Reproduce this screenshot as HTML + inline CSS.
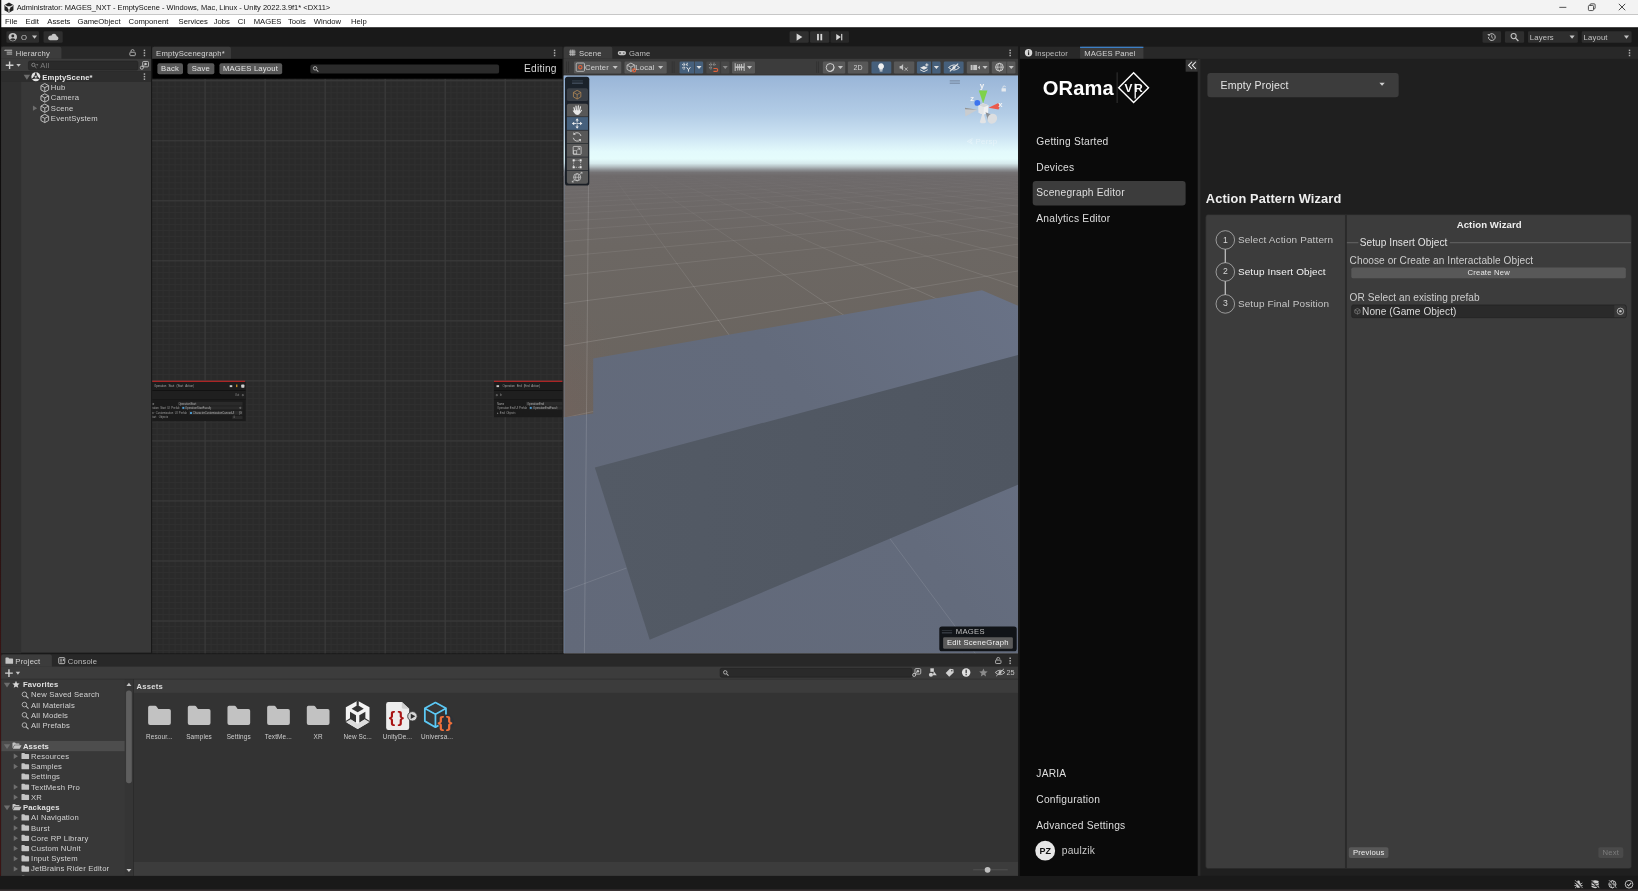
<!DOCTYPE html>
<html><head><meta charset="utf-8"><title>Unity - MAGES Panel</title>
<style>
html,body{margin:0;padding:0;background:#191919;}
body{width:1638px;height:891px;overflow:hidden;position:relative;font-family:"Liberation Sans",sans-serif;}
#stage{position:absolute;left:0;top:0;width:2560px;height:1393px;transform:scale(0.63984375);transform-origin:0 0;overflow:hidden;}
#stage div,#stage svg{position:absolute;}
#stage svg{overflow:visible;}
.t{white-space:nowrap;}
</style></head><body><div id="stage">
<div style="left:0px;top:23px;width:2560px;height:20.6px;background:#ffffff;"></div>
<div style="left:0px;top:0px;width:2560px;height:23px;background:#f3f3f3;"></div>
<svg style="left:5px;top:3px;" width="18" height="18" viewBox="0 0 18 18"><path d="M9 1 L16 5 V13 L9 17 L2 13 V5 Z" fill="#222"/><path d="M9 9 L9 16 M9 9 L3 5.6 M9 9 L15 5.6" stroke="#eee" stroke-width="1.6" fill="none"/><circle cx="9" cy="9" r="2.2" fill="#eee"/></svg>
<div class="t" style="left:26px;top:0px;height:23px;line-height:23px;font-size:11.7px;color:#111;">Administrator: MAGES_NXT - EmptyScene - Windows, Mac, Linux - Unity 2022.3.9f1* &lt;DX11&gt;</div>
<div class="t" style="left:8px;top:23px;height:20px;line-height:20px;font-size:12px;color:#111;">File</div>
<div class="t" style="left:40px;top:23px;height:20px;line-height:20px;font-size:12px;color:#111;">Edit</div>
<div class="t" style="left:74px;top:23px;height:20px;line-height:20px;font-size:12px;color:#111;">Assets</div>
<div class="t" style="left:121px;top:23px;height:20px;line-height:20px;font-size:12px;color:#111;">GameObject</div>
<div class="t" style="left:201px;top:23px;height:20px;line-height:20px;font-size:12px;color:#111;">Component</div>
<div class="t" style="left:279px;top:23px;height:20px;line-height:20px;font-size:12px;color:#111;">Services</div>
<div class="t" style="left:334px;top:23px;height:20px;line-height:20px;font-size:12px;color:#111;">Jobs</div>
<div class="t" style="left:371.5px;top:23px;height:20px;line-height:20px;font-size:12px;color:#111;">CI</div>
<div class="t" style="left:396.5px;top:23px;height:20px;line-height:20px;font-size:12px;color:#111;">MAGES</div>
<div class="t" style="left:450px;top:23px;height:20px;line-height:20px;font-size:12px;color:#111;">Tools</div>
<div class="t" style="left:490.5px;top:23px;height:20px;line-height:20px;font-size:12px;color:#111;">Window</div>
<div class="t" style="left:548.5px;top:23px;height:20px;line-height:20px;font-size:12px;color:#111;">Help</div>
<svg style="left:2433px;top:4.5px;" width="20" height="12" viewBox="0 0 20 12"><path d="M4 6.5 H15" stroke="#222" stroke-width="1.2"/></svg>
<svg style="left:2478px;top:2.5px;" width="20" height="16" viewBox="0 0 20 16"><rect x="4.5" y="5.5" width="8" height="8" rx="1.5" fill="none" stroke="#222" stroke-width="1.2"/><path d="M7 5.5 V4.5 Q7 3 8.5 3 H13.5 Q15 3 15 4.5 V9.5 Q15 11 13.5 11 H12.5" fill="none" stroke="#222" stroke-width="1.2"/></svg>
<svg style="left:2525px;top:2.5px;" width="20" height="16" viewBox="0 0 20 16"><path d="M5 3 L15 13 M15 3 L5 13" stroke="#222" stroke-width="1.3"/></svg>
<div style="left:0px;top:43.3px;width:2560px;height:1350px;background:#191919;"></div>
<div style="left:0px;top:43px;width:2560px;height:1.3px;background:#000;"></div>
<div style="left:0px;top:0px;width:1.6px;height:1393px;background:linear-gradient(180deg,#0c0c0c 0%,#141010 40%,#3a1414 75%,#3a1414 100%);"></div>
<div style="left:9.5px;top:49px;width:51.5px;height:18px;background:#2e2e2e;border-radius:2px;"></div>
<svg style="left:12px;top:50px;" width="16" height="16" viewBox="0 0 16 16"><circle cx="8" cy="8" r="6.6" fill="#c4c4c4"/><circle cx="8" cy="6.3" r="2.3" fill="#2e2e2e"/><path d="M3.6 11.6 Q8 8 12.4 11.6 Q8 15.5 3.6 11.6Z" fill="#2e2e2e"/></svg>
<div class="t" style="left:33px;top:49px;height:18px;line-height:18px;font-size:12px;color:#c4c4c4;">O</div>
<svg style="left:49px;top:54px;" width="10" height="8" viewBox="0 0 10 8"><path d="M1 1.5 H9 L5 6.5Z" fill="#c4c4c4"/></svg>
<div style="left:67.5px;top:49px;width:30px;height:18px;background:#2e2e2e;border-radius:2px;"></div>
<svg style="left:73px;top:51px;" width="20" height="14" viewBox="0 0 20 14"><path d="M5 12 H15.5 A3.2 3.2 0 0 0 15.8 5.7 A4.6 4.6 0 0 0 7 4.8 A3.7 3.7 0 0 0 5 12Z" fill="#c4c4c4"/></svg>
<div style="left:1233.5px;top:49px;width:30.5px;height:18px;background:#2f2f2f;border-radius:2px;"></div>
<div style="left:1266px;top:49px;width:30px;height:18px;background:#2f2f2f;border-radius:2px;"></div>
<div style="left:1298px;top:49px;width:29px;height:18px;background:#282828;border-radius:2px;"></div>
<svg style="left:1242px;top:51px;" width="14" height="14" viewBox="0 0 14 14"><path d="M3 1.5 L12 7 L3 12.5Z" fill="#d8d8d8"/></svg>
<svg style="left:1274px;top:51px;" width="14" height="14" viewBox="0 0 14 14"><rect x="3" y="2" width="2.8" height="10" fill="#d8d8d8"/><rect x="8.2" y="2" width="2.8" height="10" fill="#d8d8d8"/></svg>
<svg style="left:1305px;top:51px;" width="14" height="14" viewBox="0 0 14 14"><path d="M2 2 L9 7 L2 12Z" fill="#d8d8d8"/><rect x="9.6" y="2" width="1.8" height="10" fill="#d8d8d8"/></svg>
<div style="left:2316.5px;top:49px;width:29.5px;height:18px;background:#2e2e2e;border-radius:2px;"></div>
<div style="left:2352px;top:49px;width:29.5px;height:18px;background:#2e2e2e;border-radius:2px;"></div>
<div style="left:2388px;top:49px;width:77.5px;height:18px;background:#2e2e2e;border-radius:2px;"></div>
<div style="left:2472px;top:49px;width:78px;height:18px;background:#2e2e2e;border-radius:2px;"></div>
<svg style="left:2323px;top:50px;" width="16" height="16" viewBox="0 0 16 16"><path d="M3.2 8 A5.3 5.3 0 1 0 5 4" fill="none" stroke="#c4c4c4" stroke-width="1.5"/><path d="M1.5 3 L5.8 3.4 L4.6 7Z" fill="#c4c4c4"/><path d="M8.4 5 V8.4 L10.6 10" fill="none" stroke="#c4c4c4" stroke-width="1.3"/></svg>
<svg style="left:2359px;top:50px;" width="16" height="16" viewBox="0 0 16 16"><circle cx="6.6" cy="6.4" r="4" fill="none" stroke="#c4c4c4" stroke-width="1.6"/><path d="M9.6 9.6 L14 14" stroke="#c4c4c4" stroke-width="2"/></svg>
<div class="t" style="left:2391px;top:49px;height:18px;line-height:18px;font-size:12px;color:#c4c4c4;letter-spacing:0.25px;">Layers</div>
<svg style="left:2452px;top:54px;" width="10" height="8" viewBox="0 0 10 8"><path d="M1 1.5 H9 L5 6.5Z" fill="#c4c4c4"/></svg>
<div class="t" style="left:2475px;top:49px;height:18px;line-height:18px;font-size:12px;color:#c4c4c4;letter-spacing:0.25px;">Layout</div>
<svg style="left:2537px;top:54px;" width="10" height="8" viewBox="0 0 10 8"><path d="M1 1.5 H9 L5 6.5Z" fill="#c4c4c4"/></svg>
<div style="left:1.6px;top:72.9px;width:234.4px;height:947.6px;background:#383838;"></div>
<div style="left:1.6px;top:72.9px;width:234.4px;height:19.099999999999994px;background:#282828;"></div>
<div style="left:1.6px;top:73.4px;width:94px;height:18.599999999999994px;background:#3c3c3c;border-radius:3px 3px 0 0;"></div>
<div class="t" style="left:24.5px;top:74.7px;height:19px;line-height:19px;font-size:12px;color:#d2d2d2;letter-spacing:0.25px;">Hierarchy</div>
<svg style="left:7px;top:76.9px;" width="13" height="11" viewBox="0 0 13 11"><path d="M0.5 1.5 H12 M3.5 4.5 H12 M3.5 7.5 H12 M0.5 1.5 V2.5" stroke="#c4c4c4" stroke-width="1.5"/></svg>
<svg style="left:202px;top:75.9px;" width="11" height="12" viewBox="0 0 11 12"><rect x="1" y="5.6" width="8.4" height="5.4" rx="1" fill="none" stroke="#b2b2b2" stroke-width="1.5"/><path d="M2.8 5.6 V4 A2.4 2.4 0 0 1 7.6 3.8" fill="none" stroke="#b2b2b2" stroke-width="1.4"/></svg>
<svg style="left:223.5px;top:75.9px;" width="4" height="14" viewBox="0 0 4 14"><rect x="0.6" y="1.6" width="2.3" height="2.3" fill="#b2b2b2"/><rect x="0.6" y="5.6" width="2.3" height="2.3" fill="#b2b2b2"/><rect x="0.6" y="9.6" width="2.3" height="2.3" fill="#b2b2b2"/></svg>
<div style="left:1.6px;top:92px;width:234.4px;height:20px;background:#3c3c3c;"></div>
<div style="left:1.6px;top:111.3px;width:234.4px;height:1px;background:#232323;"></div>
<svg style="left:8px;top:95px;" width="14" height="14" viewBox="0 0 14 14"><path d="M7 1 V13 M1 7 H13" stroke="#d2d2d2" stroke-width="2.2"/></svg>
<svg style="left:25px;top:99px;" width="8" height="7" viewBox="0 0 8 7"><path d="M0.5 1 H7.5 L4 5.5Z" fill="#c4c4c4"/></svg>
<div style="left:44px;top:94.5px;width:172px;height:15.5px;background:#2a2a2a;border-radius:3px;border:1px solid #222;box-sizing:border-box;"></div>
<svg style="left:48px;top:97px;" width="13" height="11" viewBox="0 0 13 11"><circle cx="4.2" cy="4.4" r="2.6" fill="none" stroke="#8a8a8a" stroke-width="1.4"/><path d="M6.2 6.4 L9 9.2" stroke="#8a8a8a" stroke-width="1.5"/><path d="M8.5 3.5 H12 L10.2 5.6Z" fill="#8a8a8a"/></svg>
<div class="t" style="left:63px;top:94.5px;height:16px;line-height:16px;font-size:12px;color:#7e7e7e;letter-spacing:0.25px;">All</div>
<svg style="left:218px;top:94px;" width="16" height="16" viewBox="0 0 16 16"><rect x="5" y="2" width="9" height="8.5" rx="1.5" fill="none" stroke="#c4c4c4" stroke-width="1.4"/><circle cx="9.5" cy="6" r="2" fill="#c4c4c4"/><circle cx="3.7" cy="11.8" r="2.4" fill="none" stroke="#c4c4c4" stroke-width="1.4"/><path d="M5.5 10 L8 7.6" stroke="#c4c4c4" stroke-width="1.4"/></svg>
<div style="left:1.6px;top:112px;width:31px;height:909px;background:#303030;"></div>
<div style="left:1.6px;top:112px;width:234.4px;height:16px;background:#2d2d2d;"></div>
<svg style="left:36px;top:116px;" width="12" height="9" viewBox="0 0 12 9"><path d="M1 1 H11 L6 8.5Z" fill="#6e6e6e"/></svg>
<svg style="left:48px;top:112px;" width="16" height="16" viewBox="0 0 16 16"><circle cx="8" cy="8" r="7" fill="#e4e4e4"/><path d="M8 8 L8 1.5 M8 8 L2.3 11.4 M8 8 L13.7 11.4" stroke="#2d2d2d" stroke-width="2"/><path d="M8 3.3 L12.2 10.3 H3.8Z" fill="none" stroke="#2d2d2d" stroke-width="1.3"/><circle cx="8" cy="8" r="1.4" fill="#e4e4e4"/></svg>
<div class="t" style="left:66px;top:112.6px;height:16px;line-height:16px;font-size:12px;color:#e6e6e6;font-weight:700;letter-spacing:0.2px;">EmptyScene*</div>
<svg style="left:223.5px;top:113px;" width="4" height="14" viewBox="0 0 4 14"><rect x="0.6" y="1.6" width="2.3" height="2.3" fill="#b2b2b2"/><rect x="0.6" y="5.6" width="2.3" height="2.3" fill="#b2b2b2"/><rect x="0.6" y="9.6" width="2.3" height="2.3" fill="#b2b2b2"/></svg>
<svg style="left:62px;top:128.8px;" width="16" height="16" viewBox="0 0 16 16"><path d="M8 1.6 L14 4.8 V11.4 L8 14.6 L2 11.4 V4.8Z M2.2 4.9 L8 8 L13.8 4.9 M8 8 V14.4" fill="none" stroke="#c8c8c8" stroke-width="1.4" stroke-linejoin="round"/></svg>
<div class="t" style="left:79.5px;top:128.8px;height:16px;line-height:16px;font-size:12px;color:#d2d2d2;letter-spacing:0.25px;">Hub</div>
<svg style="left:62px;top:144.8px;" width="16" height="16" viewBox="0 0 16 16"><path d="M8 1.6 L14 4.8 V11.4 L8 14.6 L2 11.4 V4.8Z M2.2 4.9 L8 8 L13.8 4.9 M8 8 V14.4" fill="none" stroke="#c8c8c8" stroke-width="1.4" stroke-linejoin="round"/></svg>
<div class="t" style="left:79.5px;top:144.8px;height:16px;line-height:16px;font-size:12px;color:#d2d2d2;letter-spacing:0.25px;">Camera</div>
<svg style="left:62px;top:160.8px;" width="16" height="16" viewBox="0 0 16 16"><path d="M8 1.6 L14 4.8 V11.4 L8 14.6 L2 11.4 V4.8Z M2.2 4.9 L8 8 L13.8 4.9 M8 8 V14.4" fill="none" stroke="#c8c8c8" stroke-width="1.4" stroke-linejoin="round"/></svg>
<div class="t" style="left:79.5px;top:160.8px;height:16px;line-height:16px;font-size:12px;color:#d2d2d2;letter-spacing:0.25px;">Scene</div>
<svg style="left:50px;top:163.8px;" width="9" height="10" viewBox="0 0 9 10"><path d="M1.5 0.8 L8 5 L1.5 9.2Z" fill="#6e6e6e"/></svg>
<svg style="left:62px;top:176.8px;" width="16" height="16" viewBox="0 0 16 16"><path d="M8 1.6 L14 4.8 V11.4 L8 14.6 L2 11.4 V4.8Z M2.2 4.9 L8 8 L13.8 4.9 M8 8 V14.4" fill="none" stroke="#c8c8c8" stroke-width="1.4" stroke-linejoin="round"/></svg>
<div class="t" style="left:79.5px;top:176.8px;height:16px;line-height:16px;font-size:12px;color:#d2d2d2;letter-spacing:0.25px;">EventSystem</div>
<div style="left:238px;top:72.9px;width:640.5px;height:947.6px;background:#282828;"></div>
<div style="left:238px;top:72.9px;width:640.5px;height:19.099999999999994px;background:#282828;"></div>
<div style="left:238px;top:73.4px;width:123px;height:18.599999999999994px;background:#3c3c3c;border-radius:3px 3px 0 0;"></div>
<div class="t" style="left:244px;top:74.7px;height:19px;line-height:19px;font-size:12px;color:#d2d2d2;letter-spacing:0.25px;">EmptyScenegraph*</div>
<svg style="left:865px;top:75.9px;" width="4" height="14" viewBox="0 0 4 14"><rect x="0.6" y="1.6" width="2.3" height="2.3" fill="#b2b2b2"/><rect x="0.6" y="5.6" width="2.3" height="2.3" fill="#b2b2b2"/><rect x="0.6" y="9.6" width="2.3" height="2.3" fill="#b2b2b2"/></svg>
<div style="left:238px;top:123px;width:640.5px;height:897.5px;overflow:hidden;background-color:#2a2a2a;
background-image:linear-gradient(90deg,#3b3b3b 0,#3b3b3b 1.4px,transparent 1.4px),linear-gradient(0deg,transparent 92.42999999999999px,#3b3b3b 92.42999999999999px),linear-gradient(90deg,#2f2f2f 0,#2f2f2f 1.2px,transparent 1.2px),linear-gradient(0deg,transparent 8.183px,#2f2f2f 8.183px);
background-size:93.83px 93.83px,93.83px 93.83px,9.383px 9.383px,9.383px 9.383px;
background-position:81.76556776556771px 0,0 -91.39431013431013px,6.701567765567717px 0,0 -7.147310134310131px;">
<div style="left:-3.6px;top:474.0px;width:149.1px;height:61.4px;background:#1b1b1b;"></div>
<div style="left:-3.6px;top:474.0px;width:149.1px;height:13.0px;background:#1d1d1d;"></div>
<div style="left:-3.6px;top:487.0px;width:149.1px;height:1.3px;background:#101010;"></div>
<div style="left:-3.6px;top:488.2px;width:149.1px;height:13.1px;background:#1f1f1f;"></div>
<div style="left:-3.6px;top:501.1px;width:149.1px;height:0.9px;background:#161616;"></div>
<div style="left:-3.6px;top:472.3px;width:148.8px;height:2.2px;background:#ad2626;"></div>
<div class="t" style="left:2.7px;top:477.3px;width:62.5px;height:8px;line-height:8px;font-size:4.4px;color:#a8a8a8;letter-spacing:0;text-align:justify;text-align-last:justify;overflow:hidden;">Operation Start (Start Action)</div>
<div style="left:121.2px;top:479.0px;width:4.1px;height:2.8px;background:#c8c8c8;"></div>
<div style="left:130.8px;top:478.4px;width:2.5px;height:4.1px;background:#d89a2c;"></div>
<div style="left:138.7px;top:478.1px;width:5.0px;height:4.7px;background:#cfcfcf;border-radius:1px;"></div>
<div class="t" style="left:129.3px;top:491.2px;width:7.8px;height:8px;line-height:8px;font-size:4.0px;color:#9a9a9a;letter-spacing:0;text-align:justify;text-align-last:justify;overflow:hidden;">Out</div>
<div style="left:139.9px;top:492.9px;width:2.8px;height:2.8px;background:#1f1f1f;border:0.6px solid #8a8a8a;border-radius:50%;box-sizing:border-box;"></div>
<div style="left:40.0px;top:504.7px;width:101.3px;height:5.9px;background:#2a2a2a;"></div>
<div style="left:45.7px;top:511.7px;width:95.6px;height:5.8px;background:#2a2a2a;"></div>
<div style="left:57.4px;top:519.3px;width:83.9px;height:5.9px;background:#2a2a2a;"></div>
<div style="left:125.4px;top:526.5px;width:15.9px;height:5.6px;background:#2a2a2a;"></div>
<div class="t" style="left:-2.8px;top:504.5px;width:7.0px;height:8px;line-height:8px;font-size:4.3px;color:#a8a8a8;letter-spacing:0;text-align:justify;text-align-last:justify;overflow:hidden;">me</div>
<div class="t" style="left:40.8px;top:504.5px;width:29.9px;height:8px;line-height:8px;font-size:4.3px;color:#b2b2b2;letter-spacing:0;text-align:justify;text-align-last:justify;overflow:hidden;">OperationStart</div>
<div class="t" style="left:-2.8px;top:511.4px;width:45.3px;height:8px;line-height:8px;font-size:4.3px;color:#9e9e9e;letter-spacing:0;text-align:justify;text-align-last:justify;overflow:hidden;">eration Start UI Prefab</div>
<div style="left:46.8px;top:512.9px;width:3.1px;height:3.1px;background:#4d9fd6;"></div>
<div class="t" style="left:51.1px;top:511.4px;width:41.4px;height:8px;line-height:8px;font-size:4.3px;color:#b2b2b2;letter-spacing:0;text-align:justify;text-align-last:justify;overflow:hidden;">OperationStartFaculty</div>
<div style="left:135.8px;top:512.9px;width:3.1px;height:3.1px;background:#2a2a2a;border:0.6px solid #8a8a8a;border-radius:50%;box-sizing:border-box;"></div>
<div class="t" style="left:-2.8px;top:519.2px;width:57.0px;height:8px;line-height:8px;font-size:4.3px;color:#9e9e9e;letter-spacing:0;text-align:justify;text-align-last:justify;overflow:hidden;">ser Customization UI Prefab</div>
<div style="left:58.6px;top:520.8px;width:3.1px;height:3.1px;background:#4d9fd6;"></div>
<div class="t" style="left:63.3px;top:519.2px;width:76.9px;height:8px;line-height:8px;font-size:4.3px;color:#b2b2b2;letter-spacing:0;text-align:justify;text-align-last:justify;overflow:hidden;">CharacterCustomizationCanvasUI (G</div>
<div class="t" style="left:-2.8px;top:526.2px;width:27.4px;height:8px;line-height:8px;font-size:4.3px;color:#9e9e9e;letter-spacing:0;text-align:justify;text-align-last:justify;overflow:hidden;">Start Objects</div>
<div class="t" style="left:126.5px;top:526.2px;width:2.2px;height:8px;line-height:8px;font-size:4.3px;color:#b2b2b2;letter-spacing:0;text-align:justify;text-align-last:justify;overflow:hidden;">0</div>
<div style="left:534.4px;top:474.0px;width:109.1px;height:54.7px;background:#1b1b1b;"></div>
<div style="left:534.4px;top:474.0px;width:109.1px;height:13.0px;background:#1d1d1d;"></div>
<div style="left:534.4px;top:487.0px;width:109.1px;height:1.3px;background:#101010;"></div>
<div style="left:534.4px;top:488.2px;width:109.1px;height:13.1px;background:#1f1f1f;"></div>
<div style="left:534.4px;top:501.1px;width:109.1px;height:0.9px;background:#161616;"></div>
<div style="left:534.4px;top:472.3px;width:109.1px;height:2.2px;background:#ad2626;"></div>
<div style="left:537.8px;top:479.2px;width:4.1px;height:2.7px;background:#c8c8c8;"></div>
<div class="t" style="left:547.3px;top:477.3px;width:58.8px;height:8px;line-height:8px;font-size:4.4px;color:#a8a8a8;letter-spacing:0;text-align:justify;text-align-last:justify;overflow:hidden;">Operation End (End Action)</div>
<div style="left:537.2px;top:492.9px;width:2.8px;height:2.8px;background:#1f1f1f;border:0.6px solid #8a8a8a;border-radius:50%;box-sizing:border-box;"></div>
<div class="t" style="left:543.1px;top:491.2px;width:4.1px;height:8px;line-height:8px;font-size:4.0px;color:#9a9a9a;letter-spacing:0;text-align:justify;text-align-last:justify;overflow:hidden;">In</div>
<div style="left:584.1px;top:504.7px;width:59.4px;height:5.9px;background:#2a2a2a;"></div>
<div style="left:588.8px;top:511.7px;width:54.7px;height:5.8px;background:#2a2a2a;"></div>
<div class="t" style="left:538.8px;top:504.5px;width:11.7px;height:8px;line-height:8px;font-size:4.3px;color:#a8a8a8;letter-spacing:0;text-align:justify;text-align-last:justify;overflow:hidden;">Name</div>
<div class="t" style="left:585.6px;top:504.5px;width:27.4px;height:8px;line-height:8px;font-size:4.3px;color:#b2b2b2;letter-spacing:0;text-align:justify;text-align-last:justify;overflow:hidden;">OperationEnd</div>
<div class="t" style="left:538.8px;top:511.4px;width:46.9px;height:8px;line-height:8px;font-size:4.3px;color:#9e9e9e;letter-spacing:0;text-align:justify;text-align-last:justify;overflow:hidden;">Operation End UI Prefab</div>
<div style="left:590.0px;top:512.9px;width:3.1px;height:3.1px;background:#4d9fd6;"></div>
<div class="t" style="left:595.0px;top:511.4px;width:38.3px;height:8px;line-height:8px;font-size:4.3px;color:#b2b2b2;letter-spacing:0;text-align:justify;text-align-last:justify;overflow:hidden;">OperationEndFaculty</div>
<div class="t" style="left:538.8px;top:518.6px;width:28.9px;height:8px;line-height:8px;font-size:4.3px;color:#9e9e9e;letter-spacing:0;text-align:justify;text-align-last:justify;overflow:hidden;">▸ End Objects</div>
</div>
<div style="left:238px;top:92px;width:640.5px;height:31px;background:#000;"></div>
<div style="left:245.5px;top:98.5px;width:40.5px;height:17.5px;background:#585858;border-radius:3px;"></div>
<div class="t" style="left:245.5px;top:98.5px;width:40.5px;height:17.5px;line-height:17.5px;font-size:12px;color:#e4e4e4;text-align:center;letter-spacing:0.3px;">Back</div>
<div style="left:293px;top:98.5px;width:42px;height:17.5px;background:#585858;border-radius:3px;"></div>
<div class="t" style="left:293px;top:98.5px;width:42px;height:17.5px;line-height:17.5px;font-size:12px;color:#e4e4e4;text-align:center;letter-spacing:0.3px;">Save</div>
<div style="left:342.5px;top:98.5px;width:98px;height:17.5px;background:#585858;border-radius:3px;"></div>
<div class="t" style="left:342.5px;top:98.5px;width:98px;height:17.5px;line-height:17.5px;font-size:12px;color:#e4e4e4;text-align:center;letter-spacing:0.3px;">MAGES Layout</div>
<div style="left:485px;top:100.5px;width:295px;height:14.5px;background:#2a2a2a;border-radius:3px;"></div>
<svg style="left:488px;top:102px;" width="12" height="12" viewBox="0 0 12 12"><circle cx="4.5" cy="4.8" r="2.7" fill="none" stroke="#bbb" stroke-width="1.4"/><path d="M6.5 7 L9.5 10" stroke="#bbb" stroke-width="1.6"/></svg>
<div class="t" style="left:819px;top:96px;height:24px;line-height:24px;font-size:16px;color:#d6d6d6;letter-spacing:0.3px;">Editing</div>
<div style="left:881px;top:72.9px;width:710px;height:947.6px;background:#383838;"></div>
<div style="left:881px;top:72.9px;width:710px;height:19.099999999999994px;background:#282828;"></div>
<div style="left:881px;top:73.4px;width:76px;height:18.599999999999994px;background:#3c3c3c;border-radius:3px 3px 0 0;"></div>
<div class="t" style="left:905px;top:74.7px;height:19px;line-height:19px;font-size:12px;color:#d2d2d2;letter-spacing:0.25px;">Scene</div>
<div class="t" style="left:983px;top:74.7px;height:19px;line-height:19px;font-size:12px;color:#bdbdbd;letter-spacing:0.25px;">Game</div>
<svg style="left:889px;top:77.4px;" width="11" height="11" viewBox="0 0 11 11"><path d="M0.5 3 H10.5 M0.5 5.5 H10.5 M0.5 8 H10.5 M3 0.5 V10.5 M5.5 0.5 V10.5 M8 0.5 V10.5" stroke="#c4c4c4" stroke-width="1.2"/></svg>
<svg style="left:965px;top:78.9px;" width="14" height="8" viewBox="0 0 14 8"><rect x="0.5" y="0.8" width="13" height="6.4" rx="3.2" fill="#c4c4c4"/><circle cx="4" cy="4" r="1.3" fill="#282828"/><circle cx="10" cy="4" r="1" fill="#282828"/></svg>
<svg style="left:1577px;top:75.9px;" width="4" height="14" viewBox="0 0 4 14"><rect x="0.6" y="1.6" width="2.3" height="2.3" fill="#b2b2b2"/><rect x="0.6" y="5.6" width="2.3" height="2.3" fill="#b2b2b2"/><rect x="0.6" y="9.6" width="2.3" height="2.3" fill="#b2b2b2"/></svg>
<div style="left:881px;top:92px;width:710px;height:25.5px;background:#3c3c3c;"></div>
<div style="left:881px;top:117px;width:710px;height:1px;background:#1e1e1e;"></div>
<div style="left:885.3724053724053px;top:96px;width:1px;height:18px;background:#2e2e2e;"></div>
<div style="left:888.0293040293041px;top:96px;width:1px;height:18px;background:#2e2e2e;"></div>
<div style="left:1050.2564102564102px;top:96px;width:1px;height:18px;background:#2e2e2e;"></div>
<div style="left:1052.9133089133088px;top:96px;width:1px;height:18px;background:#2e2e2e;"></div>
<div style="left:1276.092796092796px;top:96px;width:1px;height:18px;background:#2e2e2e;"></div>
<div style="left:1278.7496947496948px;top:96px;width:1px;height:18px;background:#2e2e2e;"></div>
<div style="left:897.2503052503052px;top:95.5px;width:73.92429792429778px;height:19px;background:#585858;border-radius:2px;"></div>
<svg style="left:899.2503052503052px;top:97px;" width="16" height="16" viewBox="0 0 16 16"><rect x="1.5" y="1.5" width="13" height="13" rx="1.5" fill="none" stroke="#c4c4c4" stroke-width="1.3"/><circle cx="8" cy="8" r="2.6" fill="none" stroke="#e0613a" stroke-width="1.7"/></svg>
<div class="t" style="left:914.2503052503052px;top:95.5px;height:19px;line-height:19px;font-size:12px;color:#d2d2d2;letter-spacing:0.25px;">Center</div>
<svg style="left:957.2503052503052px;top:102px;" width="9" height="7" viewBox="0 0 9 7"><path d="M0.5 1 H8.5 L4.5 6Z" fill="#c4c4c4"/></svg>
<div style="left:976.019536019536px;top:95.5px;width:65.95360195360195px;height:19px;background:#585858;border-radius:2px;"></div>
<svg style="left:978.019536019536px;top:97px;" width="16" height="16" viewBox="0 0 16 16"><path d="M8 1.6 L14 4.8 V11.4 L8 14.6 L2 11.4 V4.8Z M2.2 4.9 L8 8 L13.8 4.9 M8 8 V14.4" fill="none" stroke="#c4c4c4" stroke-width="1.4" stroke-linejoin="round"/></svg>
<svg style="left:987.019536019536px;top:106px;" width="8" height="8" viewBox="0 0 8 8"><circle cx="4" cy="4" r="2.4" fill="none" stroke="#e0613a" stroke-width="1.7"/></svg>
<div class="t" style="left:993.019536019536px;top:95.5px;height:19px;line-height:19px;font-size:12px;color:#d2d2d2;letter-spacing:0.25px;">Local</div>
<svg style="left:1028.019536019536px;top:102px;" width="9" height="7" viewBox="0 0 9 7"><path d="M0.5 1 H8.5 L4.5 6Z" fill="#c4c4c4"/></svg>
<div style="left:1062.4468864468863px;top:95.5px;width:22.19291819291834px;height:19px;background:#46607c;border-radius:2px 0 0 2px;"></div>
<svg style="left:1065.4468864468863px;top:97px;" width="17" height="16" viewBox="0 0 17 16"><path d="M1 4 H10 M1 9 H6 M4 1 V12 M9 1 V6" stroke="#e8e8e8" stroke-width="1.4" stroke-dasharray="2 1"/><path d="M8 8 L11 12 L14 8 M11 12 V15" stroke="#e8e8e8" stroke-width="1.5" fill="none"/></svg>
<div style="left:1085.8901098901097px;top:95.5px;width:13.44078144078162px;height:19px;background:#46607c;border-radius:0 2px 2px 0;"></div>
<svg style="left:1088.3901098901097px;top:102px;" width="9" height="7" viewBox="0 0 9 7"><path d="M0.5 1 H8.5 L4.5 6Z" fill="#e0e0e0"/></svg>
<div style="left:1104.1758241758241px;top:95.5px;width:21.098901098901024px;height:19px;background:#484848;border-radius:2px 0 0 2px;"></div>
<svg style="left:1107.1758241758241px;top:97px;" width="17" height="16" viewBox="0 0 17 16"><path d="M1 4 H12 M1 9 H6 M4 1 V13 M9 1 V6" stroke="#b4b4b4" stroke-width="1.3" stroke-dasharray="1.5 1.5"/><path d="M8 10 H12.5 A2.2 2.2 0 0 1 12.5 14.5 H8" stroke="#e0613a" stroke-width="1.7" fill="none"/></svg>
<div style="left:1126.5250305250304px;top:95.5px;width:13.909645909646088px;height:19px;background:#484848;border-radius:0 2px 2px 0;"></div>
<svg style="left:1129.0250305250304px;top:102px;" width="9" height="7" viewBox="0 0 9 7"><path d="M0.5 1 H8.5 L4.5 6Z" fill="#8a8a8a"/></svg>
<div style="left:1144.029304029304px;top:95.5px;width:35.63369963369951px;height:19px;background:#585858;border-radius:2px;"></div>
<svg style="left:1147.029304029304px;top:97px;" width="18" height="16" viewBox="0 0 18 16"><path d="M2 2 V14 M16 2 V14 M6 3 V13 M12 3 V13 M9 3 V13" stroke="#c4c4c4" stroke-width="1.6"/><path d="M2 8 H16" stroke="#c4c4c4" stroke-width="2.4"/></svg>
<svg style="left:1167.029304029304px;top:102px;" width="9" height="7" viewBox="0 0 9 7"><path d="M0.5 1 H8.5 L4.5 6Z" fill="#c4c4c4"/></svg>
<div style="left:1286.095238095238px;top:95.5px;width:35.008547008546884px;height:19px;background:#585858;border-radius:2px;"></div>
<svg style="left:1289.095238095238px;top:96.5px;" width="17" height="17" viewBox="0 0 17 17"><circle cx="8.5" cy="8.5" r="6.2" fill="none" stroke="#d0d0d0" stroke-width="1.5"/><path d="M12.5 3.5 A6.4 6.4 0 0 1 4 13.4 A6.8 6.8 0 0 0 12.5 3.5Z" fill="#d0d0d0"/></svg>
<svg style="left:1309.095238095238px;top:102px;" width="9" height="7" viewBox="0 0 9 7"><path d="M0.5 1 H8.5 L4.5 6Z" fill="#c4c4c4"/></svg>
<div style="left:1325.167277167277px;top:95.5px;width:31.88278388278377px;height:19px;background:#585858;border-radius:2px;"></div>
<div class="t" style="left:1325.167277167277px;top:95.5px;width:31.882783882783844px;text-align:center;height:19px;line-height:19px;font-size:11px;color:#d2d2d2;letter-spacing:0;">2D</div>
<div style="left:1361.5824175824175px;top:95.5px;width:31.570207570207458px;height:19px;background:#46607c;border-radius:2px;"></div>
<svg style="left:1370.0824175824175px;top:97.5px;" width="14" height="15" viewBox="0 0 14 15"><path d="M7 1 A4.6 4.6 0 0 1 9.6 9.4 V11 H4.4 V9.4 A4.6 4.6 0 0 1 7 1Z" fill="#f0f0f0"/><rect x="4.8" y="12" width="4.4" height="1.6" fill="#f0f0f0"/></svg>
<div style="left:1397.3724053724054px;top:95.5px;width:31.570207570207458px;height:19px;background:#585858;border-radius:2px;"></div>
<svg style="left:1405.3724053724054px;top:98px;" width="16" height="14" viewBox="0 0 16 14"><path d="M1 5 H3.5 L6.5 2 V12 L3.5 9 H1Z" fill="#c4c4c4"/><path d="M9 7.5 L13.5 12.5 M13.5 7.5 L9 12.5" stroke="#c4c4c4" stroke-width="1.3"/></svg>
<div style="left:1433.162393162393px;top:95.5px;width:22.03663003662996px;height:19px;background:#46607c;border-radius:2px 0 0 2px;"></div>
<svg style="left:1436.162393162393px;top:97.5px;" width="17" height="15" viewBox="0 0 17 15"><path d="M2 8 L8 5 L14 8 L8 11Z" fill="#e8e8e8"/><path d="M2 11 L8 14 L14 11" fill="none" stroke="#e8e8e8" stroke-width="1.4"/><path d="M12.5 1 V6 M10 3.5 H15" stroke="#e8e8e8" stroke-width="1.5"/></svg>
<div style="left:1456.918192918193px;top:95.5px;width:13.440781440781166px;height:19px;background:#46607c;border-radius:0 2px 2px 0;"></div>
<svg style="left:1459.418192918193px;top:102px;" width="9" height="7" viewBox="0 0 9 7"><path d="M0.5 1 H8.5 L4.5 6Z" fill="#e0e0e0"/></svg>
<div style="left:1474.7350427350427px;top:95.5px;width:31.413919413919302px;height:19px;background:#46607c;border-radius:2px;"></div>
<svg style="left:1480.7350427350427px;top:97.5px;" width="20" height="15" viewBox="0 0 20 15"><path d="M1.5 7.5 Q10 -0.5 18.5 7.5 Q10 15.5 1.5 7.5Z" fill="none" stroke="#e8e8e8" stroke-width="1.5"/><circle cx="10" cy="7.5" r="2.4" fill="#e8e8e8"/><path d="M3.5 13.5 L16.5 1.5" stroke="#e8e8e8" stroke-width="1.6"/></svg>
<div style="left:1510.5250305250304px;top:95.5px;width:35.16483516483527px;height:19px;background:#585858;border-radius:2px;"></div>
<svg style="left:1515.5250305250304px;top:98.5px;" width="17" height="13" viewBox="0 0 17 13"><rect x="1" y="2.5" width="3" height="8" fill="#c4c4c4"/><rect x="5" y="2.5" width="6" height="8" fill="#c4c4c4"/><path d="M12 6.5 L15.5 3.5 V9.5Z" fill="#c4c4c4"/></svg>
<svg style="left:1534.5250305250304px;top:102px;" width="9" height="7" viewBox="0 0 9 7"><path d="M0.5 1 H8.5 L4.5 6Z" fill="#c4c4c4"/></svg>
<div style="left:1550.3785103785103px;top:95.5px;width:22.34920634920627px;height:19px;background:#585858;border-radius:2px 0 0 2px;"></div>
<svg style="left:1553.5785103785104px;top:97px;" width="16" height="16" viewBox="0 0 16 16"><circle cx="8" cy="8" r="6" fill="none" stroke="#d0d0d0" stroke-width="1.5"/><ellipse cx="8" cy="8" rx="2.8" ry="6" fill="none" stroke="#d0d0d0" stroke-width="1.2"/><path d="M2 8 H14" stroke="#d0d0d0" stroke-width="1.2"/></svg>
<div style="left:1573.8217338217337px;top:95.5px;width:13.440781440781393px;height:19px;background:#585858;border-radius:0 2px 2px 0;"></div>
<svg style="left:1576.3217338217337px;top:102px;" width="9" height="7" viewBox="0 0 9 7"><path d="M0.5 1 H8.5 L4.5 6Z" fill="#c4c4c4"/></svg>
<div style="left:881px;top:118px;width:710px;height:902.5px;overflow:hidden;background:#6b6661;">
<svg style="left:0;top:0;" width="710" height="902.5" viewBox="563.7023437500001 75.5015625 454.28906250000006 577.458984375" preserveAspectRatio="none"><defs>
<linearGradient id="sky" x1="0" y1="75" x2="0" y2="176" gradientUnits="userSpaceOnUse">
<stop offset="0" stop-color="#98b5d8"/><stop offset="0.1" stop-color="#a0bbdb"/><stop offset="0.38" stop-color="#b2cce6"/><stop offset="0.6" stop-color="#cbe2f2"/><stop offset="0.76" stop-color="#e3fafc"/><stop offset="0.83" stop-color="#e5fcfc"/><stop offset="0.875" stop-color="#d6eaec"/><stop offset="0.91" stop-color="#b2bdc0"/><stop offset="0.94" stop-color="#8c8f92"/><stop offset="0.965" stop-color="#757375"/><stop offset="1" stop-color="#6e6a6a"/></linearGradient>
<linearGradient id="gnd" x1="0" y1="172" x2="0" y2="420" gradientUnits="userSpaceOnUse"><stop offset="0" stop-color="#6e6a6b"/><stop offset="0.3" stop-color="#6c6763"/><stop offset="1" stop-color="#6a645e"/></linearGradient>
<linearGradient id="gfade" x1="0" y1="172" x2="0" y2="330" gradientUnits="userSpaceOnUse"><stop offset="0" stop-color="#000"/><stop offset="0.12" stop-color="#333"/><stop offset="1" stop-color="#fff"/></linearGradient>
<mask id="gm" maskUnits="userSpaceOnUse" x="560" y="170" width="470" height="490"><rect x="560" y="170" width="470" height="490" fill="url(#gfade)"/></mask>
<linearGradient id="blue" x1="564" y1="650" x2="1018" y2="300" gradientUnits="userSpaceOnUse"><stop offset="0" stop-color="#626979"/><stop offset="0.6" stop-color="#636b7c"/><stop offset="1" stop-color="#697286"/></linearGradient>
<linearGradient id="dark" x1="595" y1="0" x2="1018" y2="0" gradientUnits="userSpaceOnUse"><stop offset="0" stop-color="#535a65"/><stop offset="1" stop-color="#4f5661"/></linearGradient>
<radialGradient id="red" cx="560" cy="425" r="130" gradientUnits="userSpaceOnUse" gradientTransform="translate(560 425) scale(0.5 1) translate(-560 -425)"><stop offset="0" stop-color="#80605a" stop-opacity="0.3"/><stop offset="1" stop-color="#7a625c" stop-opacity="0"/></radialGradient>
</defs><rect x="560" y="172" width="470" height="490" fill="url(#gnd)"/><rect x="560" y="70" width="470" height="106" fill="url(#sky)"/><g mask="url(#gm)"><path d="M560 592.5 L1025 423.5 M560 418.9 L1025 315.1 M560 346.5 L1025 269.8 M560 304.1 L1025 243.3 M560 276.2 L1025 225.9 M560 256.6 L1025 213.6 M560 241.9 L1025 204.5 M560 230.6 L1025 197.4 M560 221.6 L1025 191.7 M560 214.2 L1025 187.1 M560 208.1 L1025 183.3 M560 203.0 L1025 180.1 M560 198.6 L1025 177.4 M560 194.7 L1025 175.0 M560 191.4 L1025 172.9 M560 188.5 L1025 171.0 M560 185.9 L1025 169.4 M560 183.5 L1025 168.0 M560 181.4 L1025 166.7 M560 179.5 L1025 165.5 M560 177.8 L1025 164.4 M560 176.3 L1025 163.4 M560 174.8 L1025 162.5 M560 173.5 L1025 161.7 M560 172.3 L1025 160.9 M560 171.2 L1025 160.2 M560 170.1 L1025 159.6 M560 169.1 L1025 159.0 M560 168.2 L1025 158.4 M560 167.4 L1025 157.9 M560 166.6 L1025 157.4 M560 165.8 L1025 156.9 M560 165.1 L1025 156.4 M560 164.5 L1025 156.0 M560 163.8 L1025 155.6 M560 163.2 L1025 155.3 M560 162.7 L1025 154.9 M560 162.1 L1025 154.6 M560 161.6 L1025 154.3 M560 161.2 L1025 154.0 M560 160.7 L1025 153.7 M609.9 172 L966.9 660 M632.3 172 L1353.0 660 M654.7 172 L1739.1 660 M677.0 172 L2125.2 660 M699.4 172 L2511.3 660 M721.8 172 L2897.4 660 M744.1 172 L3283.5 660 M766.5 172 L3669.6 660 M788.8 172 L4055.7 660 M811.2 172 L4441.8 660 M833.6 172 L4827.9 660 M855.9 172 L5214.0 660 M878.3 172 L5600.1 660 M900.6 172 L5986.2 660 M923.0 172 L6372.3 660 M945.4 172 L6758.4 660 M967.7 172 L7144.5 660 M990.1 172 L7530.6 660 M1012.4 172 L7916.7 660 M1034.8 172 L8302.8 660 M1057.2 172 L8688.9 660 M1079.5 172 L9075.0 660 M1101.9 172 L9461.1 660 M1124.2 172 L9847.2 660 M1146.6 172 L10233.4 660 M1169.0 172 L10619.5 660 M1191.3 172 L11005.6 660 M1213.7 172 L11391.7 660 M1236.1 172 L11777.8 660 M1258.4 172 L12163.9 660 M1280.8 172 L12550.0 660 M1303.1 172 L12936.1 660 M1325.5 172 L13322.2 660 M1347.9 172 L13708.3 660 M1370.2 172 L14094.4 660 M1392.6 172 L14480.5 660 M1414.9 172 L14866.6 660 M1437.3 172 L15252.7 660 M1459.7 172 L15638.8 660 M1482.0 172 L16024.9 660 M1504.4 172 L16411.0 660 M1526.8 172 L16797.1 660 M1549.1 172 L17183.2 660 M1571.5 172 L17569.3 660 M1593.8 172 L17955.4 660 M1616.2 172 L18341.5 660 M1638.6 172 L18727.6 660 M1660.9 172 L19113.7 660 M1683.3 172 L19499.8 660 M1705.6 172 L19885.9 660 M1728.0 172 L20272.0 660 M1750.4 172 L20658.1 660 M1772.7 172 L21044.2 660 M1795.1 172 L21430.3 660 M1817.4 172 L21816.4 660 M1839.8 172 L22202.5 660 M1862.2 172 L22588.6 660 M1884.5 172 L22974.7 660 M1906.9 172 L23360.8 660 M1929.2 172 L23746.9 660" stroke="#fff" stroke-opacity="0.18" stroke-width="0.8" fill="none"/></g><rect x="562" y="280" width="80" height="140" fill="url(#red)"/><path d="M593.2 358.5 L982 290.3 L1020 306.5 L1020 655 L562 655 L562 417.5 L593.2 413.6Z" fill="url(#blue)"/><path d="M563 591.5 L626.5 568 M887.8 535.8 L976.2 654.6" stroke="#fff" stroke-opacity="0.14" stroke-width="0.8" fill="none"/><path d="M594.8 467.6 L1020 354.5 L1020 483.8 L649.7 639.8Z" fill="url(#dark)"/><path d="M588.6 172 L584.4 653" stroke="#fff" stroke-opacity="0.16" stroke-width="0.9" fill="none"/></svg>
<div style="left:0px;top:0px;width:1.2px;height:902.5px;background:rgba(120,160,210,0.55);"></div>
<div style="left:2.3406593406593856px;top:2.029304029304015px;width:37.509157509157504px;height:170.04151404151403px;background:rgba(20,25,33,0.95);border-radius:4px;"></div>
<div style="left:13.340659340659386px;top:8.029304029304015px;width:17px;height:1.4px;background:#465160;"></div>
<div style="left:13.340659340659386px;top:11.229304029304014px;width:17px;height:1.4px;background:#465160;"></div>
<div style="left:4.997557997557919px;top:20.002442002441995px;width:32.97680097680101px;height:20.161172161172168px;background:#3b4047;border-radius:3px;"></div>
<svg style="left:11.485958485958424px;top:20.08302808302808px;" width="20" height="20" viewBox="0 0 20 20"><path d="M10 3.2 L15.8 6.4 V13.4 L10 16.8 L4.2 13.4 V6.4Z M4.4 6.5 L10 9.8 L15.6 6.5 M10 9.8 V16.6" fill="none" stroke="#b98a55" stroke-width="1.2" stroke-linejoin="round"/></svg>
<div style="left:4.997557997557919px;top:44.22710622710622px;width:32.97680097680101px;height:20px;background:#585858;border-radius:3px 3px 0 0;"></div>
<svg style="left:11.485958485958424px;top:44.22710622710622px;" width="20" height="20" viewBox="0 0 20 20"><g fill="#e8e8e8"><rect x="5.6" y="5" width="1.9" height="8" rx="0.95" transform="rotate(-14 6.5 12)"/><rect x="7.9" y="2.8" width="1.9" height="9" rx="0.95" transform="rotate(-5 8.8 11)"/><rect x="10.4" y="2.6" width="1.9" height="9" rx="0.95" transform="rotate(4 11.3 11)"/><rect x="12.8" y="3.8" width="1.9" height="8" rx="0.95" transform="rotate(14 13.7 11)"/><path d="M5.4 10.2 H14.6 V13 Q14.6 17.6 10.2 17.6 Q7.4 17.6 5.8 15 L3.2 11.4 Q2.8 10 4.2 10.2 L5.6 11.8Z"/><path d="M14.4 12.6 L16.6 9.6 Q17.8 9.2 17.4 10.6 L15 15Z"/></g></svg>
<div style="left:4.997557997557919px;top:64.85714285714283px;width:32.97680097680101px;height:20px;background:#46607c;border-radius:0;"></div>
<svg style="left:11.485958485958424px;top:64.85714285714283px;" width="20" height="20" viewBox="0 0 20 20"><path d="M10 1.8 L12.6 5.4 H7.4Z M10 18.2 L12.6 14.6 H7.4Z M1.8 10 L5.4 7.4 V12.6Z M18.2 10 L14.6 7.4 V12.6Z" fill="#f0f0f0"/><path d="M10 5 V8.4 M10 11.6 V15 M5 10 H8.4 M11.6 10 H15" stroke="#f0f0f0" stroke-width="1.3"/><rect x="9.1" y="9.1" width="1.8" height="1.8" fill="#f0f0f0"/></svg>
<div style="left:4.997557997557919px;top:85.87789987789984px;width:32.97680097680101px;height:20px;background:#585858;border-radius:0;"></div>
<svg style="left:11.485958485958424px;top:85.87789987789984px;" width="20" height="20" viewBox="0 0 20 20"><path d="M16 8.6 A6.3 6.3 0 0 0 5.2 5.4 M4 11.4 A6.3 6.3 0 0 0 14.8 14.6" fill="none" stroke="#d0d0d0" stroke-width="1.4"/><path d="M4.2 2.6 L4 6.8 L8 6.4Z M15.8 17.4 L16 13.2 L12 13.6Z" fill="#d0d0d0"/></svg>
<div style="left:4.997557997557919px;top:106.8986568986569px;width:32.97680097680101px;height:20px;background:#585858;border-radius:0;"></div>
<svg style="left:11.485958485958424px;top:106.8986568986569px;" width="20" height="20" viewBox="0 0 20 20"><rect x="3.8" y="3.8" width="12.4" height="12.4" rx="1" fill="none" stroke="#d0d0d0" stroke-width="1.3"/><rect x="4.4" y="10.6" width="5" height="5" fill="none" stroke="#d0d0d0" stroke-width="1.1"/><path d="M10 10 L13.6 6.4 M10.8 6.2 H13.8 V9.2" stroke="#d0d0d0" stroke-width="1.3" fill="none"/></svg>
<div style="left:4.997557997557919px;top:127.9194139194139px;width:32.97680097680101px;height:20px;background:#585858;border-radius:0;"></div>
<svg style="left:11.485958485958424px;top:127.9194139194139px;" width="20" height="20" viewBox="0 0 20 20"><path d="M4.5 4.5 H15.5 V15.5 H4.5Z" fill="none" stroke="#d0d0d0" stroke-width="1.1" stroke-dasharray="2 1.6" stroke-dashoffset="-2.6"/><rect x="3" y="3" width="3.2" height="3.2" fill="#e6e6e6"/><rect x="13.8" y="3" width="3.2" height="3.2" fill="#e6e6e6"/><rect x="3" y="13.8" width="3.2" height="3.2" fill="#e6e6e6"/><rect x="13.8" y="13.8" width="3.2" height="3.2" fill="#e6e6e6"/></svg>
<div style="left:4.997557997557919px;top:148.94017094017096px;width:32.97680097680101px;height:20px;background:#585858;border-radius:0 0 3px 3px;"></div>
<svg style="left:11.485958485958424px;top:148.94017094017096px;" width="20" height="20" viewBox="0 0 20 20"><circle cx="10" cy="10" r="5.6" fill="none" stroke="#d0d0d0" stroke-width="1.2"/><ellipse cx="10" cy="10" rx="2.5" ry="5.6" fill="none" stroke="#d0d0d0" stroke-width="1"/><path d="M4.4 10 H15.6 M14.4 5.6 L17.6 2.4 M15.4 2.4 H17.6 V4.6 M5.6 14.4 L2.4 17.6 M2.4 15.4 V17.6 H4.6" stroke="#d0d0d0" stroke-width="1.1" fill="none"/></svg>
<svg style="left:588.1086691086691px;top:0.7789987789987691px;" width="125.03052503052503" height="115.65323565323564" viewBox="940 76 80 74"><rect x="949.8" y="80.2" width="10.2" height="1.1" fill="#7789a1"/><rect x="949.8" y="82.5" width="10.2" height="1.1" fill="#7789a1"/><path d="M965 107.6 L977.6 109.6 L965.4 116.4Z" fill="#c9cccf"/><path d="M965 107.6 L977.6 109.6 L965.2 109.2Z" fill="#8f9396"/><path d="M983.2 111 L979.8 122 Q983 124.4 986.2 122Z" fill="#e2e4e6"/><circle cx="977.4" cy="102.8" r="2.9" fill="#3d74ee"/><path d="M978.9 90.4 H987.5 L983.2 103.4Z" fill="#7fd24c"/><path d="M988.6 107.6 L998.4 102.8 Q1000.6 106 998.6 109.4Z" fill="#ea5a4c"/><path d="M978.6 105.6 L983 103.2 L988.6 105 L988.2 112.6 L983.6 114.6 L978.8 112.6Z" fill="#f1f2f3"/><path d="M978.6 105.6 L983 103.2 L988.6 105 L984 107Z" fill="#d5d7d9"/><path d="M978.6 105.6 L984 107 L983.6 114.6 L978.8 112.6Z" fill="#e4e6e8"/><path d="M985.6 112 L996.4 116.4 L988.4 121.6Z" fill="#8c9094"/><ellipse cx="992.4" cy="118.6" rx="4.6" ry="5.2" transform="rotate(35 992.4 118.6)" fill="#dcdee0"/><text x="979.8" y="88.2" font-family="Liberation Sans, sans-serif" font-size="8" font-weight="700" fill="#f4f4f4">y</text><text x="970.3" y="100.8" font-family="Liberation Sans, sans-serif" font-size="7.6" font-weight="700" fill="#f4f4f4">z</text><text x="998.4" y="106.4" font-family="Liberation Sans, sans-serif" font-size="7.6" font-weight="700" fill="#f4f4f4">x</text><rect x="1001.6" y="88.2" width="4.4" height="3.2" rx="0.5" fill="#f2f2f2" fill-opacity="0.85"/><path d="M1003 88.2 V87.2 A1.3 1.3 0 0 1 1005.6 87" fill="none" stroke="#f2f2f2" stroke-opacity="0.85" stroke-width="0.8"/><path d="M972.6 138.4 L967.4 141.2 L972.6 144 M972.6 139.8 L969.8 141.2 L972.6 142.6" fill="none" stroke="#fff" stroke-opacity="0.4" stroke-width="0.8"/><text x="975.6" y="144.2" font-family="Liberation Sans, sans-serif" font-size="8" fill="#fff" fill-opacity="0.38" letter-spacing="0.2">Persp</text></svg>
<div style="left:586.7020757020757px;top:860.5201465201465px;width:121.12332112332112px;height:39.853479853479854px;background:#111418;border-radius:4px;"></div>
<div style="left:591.2344322344322px;top:866.6153846153845px;width:16px;height:1.3px;background:#3b4048;"></div>
<div style="left:591.2344322344322px;top:870.2100122100121px;width:16px;height:1.3px;background:#3b4048;"></div>
<div class="t" style="left:612.8021978021977px;top:860.9890109890109px;height:17px;line-height:17px;font-size:12px;color:#bdbdbd;letter-spacing:0.4px;">MAGES</div>
<div style="left:592.953601953602px;top:878.3369963369963px;width:108.62026862026862px;height:17.504273504273574px;background:#5a5a5a;border-radius:2px;"></div>
<div class="t" style="left:592.953601953602px;top:878.3369963369963px;width:108.62026862026862px;text-align:center;height:17.504273504273502px;line-height:17.504273504273502px;font-size:12px;color:#efefef;letter-spacing:0.35px;">Edit SceneGraph</div>
</div>
<div style="left:1594px;top:72.9px;width:966px;height:1296.1px;background:#1f1f1f;"></div>
<div style="left:1594px;top:72.9px;width:966px;height:19.099999999999994px;background:#282828;"></div>
<div class="t" style="left:1617.5px;top:74.7px;height:19px;line-height:19px;font-size:12px;color:#bdbdbd;letter-spacing:0.25px;">Inspector</div>
<div style="left:1688px;top:73.4px;width:98.5px;height:18.599999999999994px;background:#3c3c3c;border-radius:3px 3px 0 0;"></div>
<div class="t" style="left:1694.5px;top:74.7px;height:19px;line-height:19px;font-size:12px;color:#d2d2d2;letter-spacing:0.25px;">MAGES Panel</div>
<div style="left:1688px;top:72.9px;width:98.5px;height:2px;background:#3d80c8;"></div>
<svg style="left:1601px;top:76.4px;" width="13" height="13" viewBox="0 0 13 13"><circle cx="6.5" cy="6.5" r="5.8" fill="#d8d8d8"/><rect x="5.6" y="5.6" width="1.9" height="4.4" fill="#282828"/><rect x="5.6" y="2.8" width="1.9" height="1.9" fill="#282828"/></svg>
<svg style="left:2545px;top:75.9px;" width="4" height="14" viewBox="0 0 4 14"><rect x="0.6" y="1.6" width="2.3" height="2.3" fill="#b2b2b2"/><rect x="0.6" y="5.6" width="2.3" height="2.3" fill="#b2b2b2"/><rect x="0.6" y="9.6" width="2.3" height="2.3" fill="#b2b2b2"/></svg>
<div style="left:1594px;top:92px;width:278.20000000000005px;height:1277px;background:#0a0a0a;"></div>
<div style="left:1872.2px;top:92px;width:3.4px;height:1277px;background:#2b2b2b;"></div>
<div style="left:1853.3px;top:92.6px;width:19px;height:19px;background:#363636;"></div>
<svg style="left:1855.5px;top:95px;" width="15" height="14" viewBox="0 0 15 14"><path d="M7 1.5 L1.5 7 L7 12.5 M13 1.5 L7.5 7 L13 12.5" fill="none" stroke="#f0f0f0" stroke-width="1.6"/></svg>
<div class="t" style="left:1629.6px;top:119px;height:38px;line-height:38px;font-size:31.4px;color:#ffffff;font-weight:700;letter-spacing:0.3px;">ORama</div>
<div style="left:1745.4px;top:112.5px;width:1.4px;height:48px;background:#2a2a2a;"></div>
<svg style="left:1746px;top:112px;" width="52" height="50" viewBox="0 0 52 50"><path d="M25.7 1.8 L49 25 L25.7 48.2 L2.4 25Z" fill="none" stroke="#fff" stroke-width="2.2"/><path d="M28.2 19 V42" stroke="#fff" stroke-width="2"/><text x="11.6" y="31.8" font-family="Liberation Sans, sans-serif" font-size="18.5" font-weight="700" fill="#fff">V</text><text x="26.6" y="31.8" font-family="Liberation Sans, sans-serif" font-size="18.5" font-weight="700" fill="#fff">R</text></svg>
<div style="left:1613.6px;top:282.6px;width:239.6px;height:38.4px;background:#3c3c3c;border-radius:5px;"></div>
<div class="t" style="left:1619.6px;top:209.6px;height:24px;line-height:24px;font-size:16px;color:#dedede;letter-spacing:0.35px;">Getting Started</div>
<div class="t" style="left:1619.6px;top:249.60000000000002px;height:24px;line-height:24px;font-size:16px;color:#dedede;letter-spacing:0.35px;">Devices</div>
<div class="t" style="left:1619.6px;top:289.6px;height:24px;line-height:24px;font-size:16px;color:#dedede;letter-spacing:0.35px;">Scenegraph Editor</div>
<div class="t" style="left:1619.6px;top:329.6px;height:24px;line-height:24px;font-size:16px;color:#dedede;letter-spacing:0.35px;">Analytics Editor</div>
<div class="t" style="left:1619.6px;top:1197.9px;height:24px;line-height:24px;font-size:16px;color:#dedede;letter-spacing:0.35px;">JARIA</div>
<div class="t" style="left:1619.6px;top:1237.9px;height:24px;line-height:24px;font-size:16px;color:#dedede;letter-spacing:0.35px;">Configuration</div>
<div class="t" style="left:1619.6px;top:1277.8px;height:24px;line-height:24px;font-size:16px;color:#dedede;letter-spacing:0.35px;">Advanced Settings</div>
<div style="left:1618.1px;top:1314.1px;width:31px;height:31px;background:#e6e6e6;border-radius:50%;"></div>
<div class="t" style="left:1618.1px;top:1314.1px;width:31px;height:31px;line-height:31px;text-align:center;font-size:14px;font-weight:700;color:#111;letter-spacing:0;">PZ</div>
<div class="t" style="left:1659.5px;top:1317.6px;height:24px;line-height:24px;font-size:16px;color:#c8c8c8;letter-spacing:0.3px;">paulzik</div>
<div style="left:1886.6px;top:113.5px;width:299.3px;height:38px;background:#3c3c3c;border-radius:5px;"></div>
<div class="t" style="left:1907.5px;top:113.5px;height:38px;line-height:38px;font-size:16.5px;color:#e4e4e4;letter-spacing:0.3px;">Empty Project</div>
<svg style="left:2155px;top:128px;" width="10" height="8" viewBox="0 0 10 8"><path d="M0.8 1.5 H9.2 L5 6.2Z" fill="#d0d0d0"/></svg>
<div class="t" style="left:1884.6px;top:296px;height:30px;line-height:30px;font-size:20px;color:#eeeeee;font-weight:700;letter-spacing:0.2px;">Action Pattern Wizard</div>
<div style="left:1884px;top:335.2px;width:666px;height:1022.5999999999999px;background:#3c3c3c;border-radius:4px;border:1.4px solid #2a2a2a;box-sizing:border-box;"></div>
<div style="left:2102.4px;top:335.2px;width:2.2px;height:1022.5999999999999px;background:#2a2a2a;"></div>
<div style="left:1914.2px;top:374.8px;width:1.6px;height:100.4px;background:#bdbdbd;"></div>
<div style="left:1899.7px;top:359.5px;width:30.6px;height:30.6px;background:#3c3c3c;border-radius:50%;border:1.6px solid #cfcfcf;box-sizing:border-box;"></div>
<div class="t" style="left:1899.7px;top:359.5px;width:30.6px;height:30.6px;line-height:30.6px;text-align:center;font-size:13.5px;color:#d6d6d6;letter-spacing:0;">1</div>
<div class="t" style="left:1934.7px;top:362.8px;height:24px;line-height:24px;font-size:15.6px;color:#c6c6c6;letter-spacing:0.2px;">Select Action Pattern</div>
<div style="left:1899.7px;top:409.7px;width:30.6px;height:30.6px;background:#3c3c3c;border-radius:50%;border:1.6px solid #cfcfcf;box-sizing:border-box;"></div>
<div class="t" style="left:1899.7px;top:409.7px;width:30.6px;height:30.6px;line-height:30.6px;text-align:center;font-size:13.5px;color:#d6d6d6;letter-spacing:0;">2</div>
<div class="t" style="left:1934.7px;top:413px;height:24px;line-height:24px;font-size:15.6px;color:#f4f4f4;letter-spacing:0.2px;">Setup Insert Object</div>
<div style="left:1899.7px;top:459.9px;width:30.6px;height:30.6px;background:#3c3c3c;border-radius:50%;border:1.6px solid #cfcfcf;box-sizing:border-box;"></div>
<div class="t" style="left:1899.7px;top:459.9px;width:30.6px;height:30.6px;line-height:30.6px;text-align:center;font-size:13.5px;color:#d6d6d6;letter-spacing:0;">3</div>
<div class="t" style="left:1934.7px;top:463.2px;height:24px;line-height:24px;font-size:15.6px;color:#c6c6c6;letter-spacing:0.2px;">Setup Final Position</div>
<div class="t" style="left:2105px;top:340.4px;width:445px;height:24px;line-height:24px;text-align:center;font-size:15px;font-weight:700;color:#eeeeee;letter-spacing:0.15px;">Action Wizard</div>
<div style="left:2105px;top:378.7px;width:18px;height:1.2px;background:#7c7c7c;"></div>
<div style="left:2265.5px;top:378.7px;width:283.5px;height:1.2px;background:#7c7c7c;"></div>
<div class="t" style="left:2125px;top:367.7px;height:24px;line-height:24px;font-size:15.8px;color:#e2e2e2;letter-spacing:0.1px;">Setup Insert Object</div>
<div class="t" style="left:2109.3px;top:395.6px;height:24px;line-height:24px;font-size:15.8px;color:#cdcdcd;letter-spacing:0.08px;">Choose or Create an Interactable Object</div>
<div style="left:2112px;top:418px;width:429.3px;height:16.6px;background:#585858;border-radius:3px;"></div>
<div class="t" style="left:2112px;top:418px;width:429.3px;height:16.6px;line-height:16.6px;text-align:center;font-size:12px;color:#e6e6e6;letter-spacing:0.3px;">Create New</div>
<div class="t" style="left:2109.3px;top:453.3px;height:24px;line-height:24px;font-size:15.8px;color:#cdcdcd;letter-spacing:0.08px;">OR Select an existing prefab</div>
<div style="left:2111.5px;top:475.6px;width:430.5px;height:21px;background:#2a2a2a;border-radius:3px;border:1px solid #212121;box-sizing:border-box;"></div>
<div style="left:2523px;top:476.6px;width:18px;height:19px;background:#373737;border-radius:0 3px 3px 0;"></div>
<svg style="left:2525.5px;top:479.5px;" width="13" height="13" viewBox="0 0 13 13"><circle cx="6.5" cy="6.5" r="5" fill="none" stroke="#c4c4c4" stroke-width="1.3"/><circle cx="6.5" cy="6.5" r="2" fill="#c4c4c4"/></svg>
<svg style="left:2115.5px;top:480.5px;" width="11" height="11" viewBox="0 0 16 16"><path d="M8 1.6 L14 4.8 V11.4 L8 14.6 L2 11.4 V4.8Z M2.2 4.9 L8 8 L13.8 4.9 M8 8 V14.4" fill="none" stroke="#8a8a8a" stroke-width="1.4" stroke-linejoin="round"/></svg>
<div class="t" style="left:2128.7px;top:474.6px;height:24px;line-height:24px;font-size:15.8px;color:#d8d8d8;letter-spacing:0.1px;">None (Game Object)</div>
<div style="left:2108.4px;top:1323.8px;width:61.6px;height:16.8px;background:#585858;border-radius:3px;"></div>
<div class="t" style="left:2108.4px;top:1323.8px;width:61.6px;height:16.8px;line-height:16.8px;text-align:center;font-size:12px;color:#eeeeee;letter-spacing:0.3px;">Previous</div>
<div style="left:2498px;top:1323.8px;width:39px;height:16.8px;background:#4a4a4a;border-radius:3px;"></div>
<div class="t" style="left:2498px;top:1323.8px;width:39px;height:16.8px;line-height:16.8px;text-align:center;font-size:12px;color:#7c7c7c;letter-spacing:0.3px;">Next</div>
<div style="left:1.6px;top:1022.5px;width:1589.4px;height:346.5px;background:#383838;"></div>
<div style="left:1.6px;top:1022.5px;width:1589.4px;height:19px;background:#282828;"></div>
<div style="left:1.6px;top:1023.0px;width:79.7px;height:18.5px;background:#3c3c3c;border-radius:3px 3px 0 0;"></div>
<div class="t" style="left:24px;top:1023.7px;height:19px;line-height:19px;font-size:12px;color:#d2d2d2;letter-spacing:0.25px;">Project</div>
<div class="t" style="left:106px;top:1023.7px;height:19px;line-height:19px;font-size:12px;color:#bdbdbd;letter-spacing:0.25px;">Console</div>
<svg style="left:7.5px;top:1027.0px;" width="13" height="11" viewBox="0 0 12 10"><path d="M0.5 1.6 Q0.5 0.6 1.5 0.6 H4.6 L5.8 2 H10.6 Q11.5 2 11.5 3 V8.6 Q11.5 9.5 10.6 9.5 H1.5 Q0.5 9.5 0.5 8.6Z" fill="#c4c4c4"/></svg>
<svg style="left:91px;top:1026.5px;" width="11" height="11" viewBox="0 0 11 11"><rect x="0.8" y="0.8" width="9.4" height="9.4" rx="1.2" fill="none" stroke="#c4c4c4" stroke-width="1.4"/><path d="M2.8 3.4 H6.4 M2.8 5.5 H6.4 M2.8 7.6 H6.4" stroke="#c4c4c4" stroke-width="1.1"/><rect x="7.4" y="2.6" width="1.4" height="3.4" fill="#c4c4c4"/></svg>
<svg style="left:1555px;top:1026.0px;" width="11" height="12" viewBox="0 0 11 12"><rect x="1" y="5.6" width="8.4" height="5.4" rx="1" fill="none" stroke="#b2b2b2" stroke-width="1.5"/><path d="M2.8 5.6 V4 A2.4 2.4 0 0 1 7.6 3.8" fill="none" stroke="#b2b2b2" stroke-width="1.4"/></svg>
<svg style="left:1576.5px;top:1026.0px;" width="4" height="14" viewBox="0 0 4 14"><rect x="0.6" y="1.6" width="2.3" height="2.3" fill="#b2b2b2"/><rect x="0.6" y="5.6" width="2.3" height="2.3" fill="#b2b2b2"/><rect x="0.6" y="9.6" width="2.3" height="2.3" fill="#b2b2b2"/></svg>
<div style="left:1.6px;top:1041.5px;width:1589.4px;height:19.5px;background:#3c3c3c;"></div>
<div style="left:1.6px;top:1061px;width:1589.4px;height:1.2px;background:#232323;"></div>
<svg style="left:7px;top:1044.5px;" width="14" height="14" viewBox="0 0 14 14"><path d="M7 1 V13 M1 7 H13" stroke="#d2d2d2" stroke-width="2.2"/></svg>
<svg style="left:24px;top:1048.5px;" width="8" height="7" viewBox="0 0 8 7"><path d="M0.5 1 H7.5 L4 5.5Z" fill="#c4c4c4"/></svg>
<div style="left:1125.3px;top:1044px;width:300.7px;height:14.7px;background:#2a2a2a;border-radius:3px;border:1px solid #212121;box-sizing:border-box;"></div>
<svg style="left:1129px;top:1045.5px;" width="12" height="12" viewBox="0 0 12 12"><circle cx="4.5" cy="4.8" r="2.7" fill="none" stroke="#bbb" stroke-width="1.4"/><path d="M6.5 7 L9.5 10" stroke="#bbb" stroke-width="1.6"/></svg>
<svg style="left:1425px;top:1043px;" width="16" height="16" viewBox="0 0 16 16"><rect x="5" y="2" width="9" height="8.5" rx="1.5" fill="none" stroke="#c4c4c4" stroke-width="1.4"/><circle cx="9.5" cy="6" r="2" fill="#c4c4c4"/><circle cx="3.7" cy="11.8" r="2.4" fill="none" stroke="#c4c4c4" stroke-width="1.4"/><path d="M5.5 10 L8 7.6" stroke="#c4c4c4" stroke-width="1.4"/></svg>
<svg style="left:1450px;top:1043px;" width="16" height="16" viewBox="0 0 16 16"><rect x="4" y="1.5" width="5.5" height="5.5" fill="#d0d0d0"/><circle cx="5" cy="11.5" r="3.2" fill="#d0d0d0"/><path d="M9.5 6 L14 12.5 H8Z" fill="#d0d0d0"/></svg>
<svg style="left:1476px;top:1043px;" width="16" height="16" viewBox="0 0 16 16"><path d="M8.5 2 L14 3 L14.5 8 L7.5 14.5 L2 9Z" fill="#d0d0d0"/><circle cx="11.6" cy="5.4" r="1.2" fill="#3c3c3c"/></svg>
<svg style="left:1502px;top:1043px;" width="16" height="16" viewBox="0 0 16 16"><circle cx="8" cy="8" r="6.6" fill="#e0e0e0"/><rect x="7" y="3.6" width="2" height="5.6" fill="#3c3c3c"/><rect x="7" y="10.4" width="2" height="2" fill="#3c3c3c"/></svg>
<svg style="left:1529px;top:1043px;" width="16" height="16" viewBox="0 0 16 16"><path d="M8 1.6 L9.9 6 L14.6 6.4 L11 9.5 L12.1 14.2 L8 11.7 L3.9 14.2 L5 9.5 L1.4 6.4 L6.1 6Z" fill="#8c8c8c"/></svg>
<svg style="left:1554.4px;top:1043px;" width="20" height="16" viewBox="0 0 20 16"><path d="M1.5 8 Q9 1 16.5 8 Q9 15 1.5 8Z" fill="none" stroke="#c4c4c4" stroke-width="1.4"/><circle cx="9" cy="8" r="2.2" fill="#c4c4c4"/><path d="M3 13.6 L15 2.4" stroke="#c4c4c4" stroke-width="1.5"/></svg>
<div class="t" style="left:1573px;top:1042px;height:19px;line-height:19px;font-size:11.5px;color:#c4c4c4;">25</div>
<div style="left:1.6px;top:1062.2px;width:193.8px;height:306.79999999999995px;overflow:hidden;background:#383838;">
<div style="left:0;top:95.8px;width:193.8px;height:16px;background:#4d4d4d;"></div>
<svg style="left:3.5px;top:3.8px;" width="12" height="9" viewBox="0 0 12 9"><path d="M1 1 H11 L6 8.5Z" fill="#6e6e6e"/></svg>
<svg style="left:16.5px;top:1.3px;" width="14" height="13" viewBox="0 0 16 16"><path d="M8 1.2 L10 6 L15 6.4 L11.2 9.7 L12.4 14.6 L8 12 L3.6 14.6 L4.8 9.7 L1 6.4 L6 6Z" fill="#d6d6d6"/></svg>
<div class="t" style="left:34.199999999999996px;top:-0.2px;height:16px;line-height:16px;font-size:12px;color:#e0e0e0;letter-spacing:0.25px;font-weight:700;">Favorites</div>
<svg style="left:31px;top:17.8px;" width="13" height="13" viewBox="0 0 13 13"><circle cx="5.2" cy="5.2" r="3.6" fill="none" stroke="#c4c4c4" stroke-width="1.3"/><path d="M7.8 7.8 L11.6 11.6" stroke="#c4c4c4" stroke-width="1.6"/></svg>
<div class="t" style="left:47.0px;top:15.8px;height:16px;line-height:16px;font-size:12px;color:#d2d2d2;letter-spacing:0.25px;">New Saved Search</div>
<svg style="left:31px;top:33.8px;" width="13" height="13" viewBox="0 0 13 13"><circle cx="5.2" cy="5.2" r="3.6" fill="none" stroke="#c4c4c4" stroke-width="1.3"/><path d="M7.8 7.8 L11.6 11.6" stroke="#c4c4c4" stroke-width="1.6"/></svg>
<div class="t" style="left:47.0px;top:31.8px;height:16px;line-height:16px;font-size:12px;color:#d2d2d2;letter-spacing:0.25px;">All Materials</div>
<svg style="left:31px;top:49.8px;" width="13" height="13" viewBox="0 0 13 13"><circle cx="5.2" cy="5.2" r="3.6" fill="none" stroke="#c4c4c4" stroke-width="1.3"/><path d="M7.8 7.8 L11.6 11.6" stroke="#c4c4c4" stroke-width="1.6"/></svg>
<div class="t" style="left:47.0px;top:47.8px;height:16px;line-height:16px;font-size:12px;color:#d2d2d2;letter-spacing:0.25px;">All Models</div>
<svg style="left:31px;top:65.8px;" width="13" height="13" viewBox="0 0 13 13"><circle cx="5.2" cy="5.2" r="3.6" fill="none" stroke="#c4c4c4" stroke-width="1.3"/><path d="M7.8 7.8 L11.6 11.6" stroke="#c4c4c4" stroke-width="1.6"/></svg>
<div class="t" style="left:47.0px;top:63.8px;height:16px;line-height:16px;font-size:12px;color:#d2d2d2;letter-spacing:0.25px;">All Prefabs</div>
<svg style="left:3.5px;top:99.8px;" width="12" height="9" viewBox="0 0 12 9"><path d="M1 1 H11 L6 8.5Z" fill="#6e6e6e"/></svg>
<svg style="left:17.5px;top:98.3px;" width="15" height="11" viewBox="0 0 15 11"><path d="M0.5 1.6 Q0.5 0.6 1.5 0.6 H4.6 L5.8 2 H10.6 Q11.5 2 11.5 3 V4 H3.4 L0.5 9.5Z" fill="#c4c4c4"/><path d="M3.8 4.8 H14.6 L11.8 10.4 H1Z" fill="#c4c4c4"/></svg>
<div class="t" style="left:34.199999999999996px;top:95.8px;height:16px;line-height:16px;font-size:12px;color:#e6e6e6;letter-spacing:0.25px;font-weight:700;">Assets</div>
<svg style="left:18.5px;top:114.8px;" width="9" height="10" viewBox="0 0 9 10"><path d="M1.5 0.8 L8 5 L1.5 9.2Z" fill="#6e6e6e"/></svg>
<svg style="left:31px;top:114.3px;" width="13" height="11" viewBox="0 0 12 10"><path d="M0.5 1.6 Q0.5 0.6 1.5 0.6 H4.6 L5.8 2 H10.6 Q11.5 2 11.5 3 V8.6 Q11.5 9.5 10.6 9.5 H1.5 Q0.5 9.5 0.5 8.6Z" fill="#c4c4c4"/></svg>
<div class="t" style="left:47.0px;top:111.8px;height:16px;line-height:16px;font-size:12px;color:#d2d2d2;letter-spacing:0.25px;">Resources</div>
<svg style="left:18.5px;top:130.8px;" width="9" height="10" viewBox="0 0 9 10"><path d="M1.5 0.8 L8 5 L1.5 9.2Z" fill="#6e6e6e"/></svg>
<svg style="left:31px;top:130.3px;" width="13" height="11" viewBox="0 0 12 10"><path d="M0.5 1.6 Q0.5 0.6 1.5 0.6 H4.6 L5.8 2 H10.6 Q11.5 2 11.5 3 V8.6 Q11.5 9.5 10.6 9.5 H1.5 Q0.5 9.5 0.5 8.6Z" fill="#c4c4c4"/></svg>
<div class="t" style="left:47.0px;top:127.8px;height:16px;line-height:16px;font-size:12px;color:#d2d2d2;letter-spacing:0.25px;">Samples</div>
<svg style="left:31px;top:146.3px;" width="13" height="11" viewBox="0 0 12 10"><path d="M0.5 1.6 Q0.5 0.6 1.5 0.6 H4.6 L5.8 2 H10.6 Q11.5 2 11.5 3 V8.6 Q11.5 9.5 10.6 9.5 H1.5 Q0.5 9.5 0.5 8.6Z" fill="#c4c4c4"/></svg>
<div class="t" style="left:47.0px;top:143.8px;height:16px;line-height:16px;font-size:12px;color:#d2d2d2;letter-spacing:0.25px;">Settings</div>
<svg style="left:18.5px;top:162.8px;" width="9" height="10" viewBox="0 0 9 10"><path d="M1.5 0.8 L8 5 L1.5 9.2Z" fill="#6e6e6e"/></svg>
<svg style="left:31px;top:162.3px;" width="13" height="11" viewBox="0 0 12 10"><path d="M0.5 1.6 Q0.5 0.6 1.5 0.6 H4.6 L5.8 2 H10.6 Q11.5 2 11.5 3 V8.6 Q11.5 9.5 10.6 9.5 H1.5 Q0.5 9.5 0.5 8.6Z" fill="#c4c4c4"/></svg>
<div class="t" style="left:47.0px;top:159.8px;height:16px;line-height:16px;font-size:12px;color:#d2d2d2;letter-spacing:0.25px;">TextMesh Pro</div>
<svg style="left:18.5px;top:178.8px;" width="9" height="10" viewBox="0 0 9 10"><path d="M1.5 0.8 L8 5 L1.5 9.2Z" fill="#6e6e6e"/></svg>
<svg style="left:31px;top:178.3px;" width="13" height="11" viewBox="0 0 12 10"><path d="M0.5 1.6 Q0.5 0.6 1.5 0.6 H4.6 L5.8 2 H10.6 Q11.5 2 11.5 3 V8.6 Q11.5 9.5 10.6 9.5 H1.5 Q0.5 9.5 0.5 8.6Z" fill="#c4c4c4"/></svg>
<div class="t" style="left:47.0px;top:175.8px;height:16px;line-height:16px;font-size:12px;color:#d2d2d2;letter-spacing:0.25px;">XR</div>
<svg style="left:3.5px;top:195.8px;" width="12" height="9" viewBox="0 0 12 9"><path d="M1 1 H11 L6 8.5Z" fill="#6e6e6e"/></svg>
<svg style="left:17.5px;top:194.3px;" width="15" height="11" viewBox="0 0 15 11"><path d="M0.5 1.6 Q0.5 0.6 1.5 0.6 H4.6 L5.8 2 H10.6 Q11.5 2 11.5 3 V4 H3.4 L0.5 9.5Z" fill="#c4c4c4"/><path d="M3.8 4.8 H14.6 L11.8 10.4 H1Z" fill="#c4c4c4"/></svg>
<div class="t" style="left:34.199999999999996px;top:191.8px;height:16px;line-height:16px;font-size:12px;color:#e0e0e0;letter-spacing:0.25px;font-weight:700;">Packages</div>
<svg style="left:18.5px;top:210.8px;" width="9" height="10" viewBox="0 0 9 10"><path d="M1.5 0.8 L8 5 L1.5 9.2Z" fill="#6e6e6e"/></svg>
<svg style="left:31px;top:210.3px;" width="13" height="11" viewBox="0 0 12 10"><path d="M0.5 1.6 Q0.5 0.6 1.5 0.6 H4.6 L5.8 2 H10.6 Q11.5 2 11.5 3 V8.6 Q11.5 9.5 10.6 9.5 H1.5 Q0.5 9.5 0.5 8.6Z" fill="#c4c4c4"/></svg>
<div class="t" style="left:47.0px;top:207.8px;height:16px;line-height:16px;font-size:12px;color:#d2d2d2;letter-spacing:0.25px;">AI Navigation</div>
<svg style="left:18.5px;top:226.8px;" width="9" height="10" viewBox="0 0 9 10"><path d="M1.5 0.8 L8 5 L1.5 9.2Z" fill="#6e6e6e"/></svg>
<svg style="left:31px;top:226.3px;" width="13" height="11" viewBox="0 0 12 10"><path d="M0.5 1.6 Q0.5 0.6 1.5 0.6 H4.6 L5.8 2 H10.6 Q11.5 2 11.5 3 V8.6 Q11.5 9.5 10.6 9.5 H1.5 Q0.5 9.5 0.5 8.6Z" fill="#c4c4c4"/></svg>
<div class="t" style="left:47.0px;top:223.8px;height:16px;line-height:16px;font-size:12px;color:#d2d2d2;letter-spacing:0.25px;">Burst</div>
<svg style="left:18.5px;top:242.8px;" width="9" height="10" viewBox="0 0 9 10"><path d="M1.5 0.8 L8 5 L1.5 9.2Z" fill="#6e6e6e"/></svg>
<svg style="left:31px;top:242.3px;" width="13" height="11" viewBox="0 0 12 10"><path d="M0.5 1.6 Q0.5 0.6 1.5 0.6 H4.6 L5.8 2 H10.6 Q11.5 2 11.5 3 V8.6 Q11.5 9.5 10.6 9.5 H1.5 Q0.5 9.5 0.5 8.6Z" fill="#c4c4c4"/></svg>
<div class="t" style="left:47.0px;top:239.8px;height:16px;line-height:16px;font-size:12px;color:#d2d2d2;letter-spacing:0.25px;">Core RP Library</div>
<svg style="left:18.5px;top:258.8px;" width="9" height="10" viewBox="0 0 9 10"><path d="M1.5 0.8 L8 5 L1.5 9.2Z" fill="#6e6e6e"/></svg>
<svg style="left:31px;top:258.3px;" width="13" height="11" viewBox="0 0 12 10"><path d="M0.5 1.6 Q0.5 0.6 1.5 0.6 H4.6 L5.8 2 H10.6 Q11.5 2 11.5 3 V8.6 Q11.5 9.5 10.6 9.5 H1.5 Q0.5 9.5 0.5 8.6Z" fill="#c4c4c4"/></svg>
<div class="t" style="left:47.0px;top:255.8px;height:16px;line-height:16px;font-size:12px;color:#d2d2d2;letter-spacing:0.25px;">Custom NUnit</div>
<svg style="left:18.5px;top:274.8px;" width="9" height="10" viewBox="0 0 9 10"><path d="M1.5 0.8 L8 5 L1.5 9.2Z" fill="#6e6e6e"/></svg>
<svg style="left:31px;top:274.3px;" width="13" height="11" viewBox="0 0 12 10"><path d="M0.5 1.6 Q0.5 0.6 1.5 0.6 H4.6 L5.8 2 H10.6 Q11.5 2 11.5 3 V8.6 Q11.5 9.5 10.6 9.5 H1.5 Q0.5 9.5 0.5 8.6Z" fill="#c4c4c4"/></svg>
<div class="t" style="left:47.0px;top:271.8px;height:16px;line-height:16px;font-size:12px;color:#d2d2d2;letter-spacing:0.25px;">Input System</div>
<svg style="left:18.5px;top:290.8px;" width="9" height="10" viewBox="0 0 9 10"><path d="M1.5 0.8 L8 5 L1.5 9.2Z" fill="#6e6e6e"/></svg>
<svg style="left:31px;top:290.3px;" width="13" height="11" viewBox="0 0 12 10"><path d="M0.5 1.6 Q0.5 0.6 1.5 0.6 H4.6 L5.8 2 H10.6 Q11.5 2 11.5 3 V8.6 Q11.5 9.5 10.6 9.5 H1.5 Q0.5 9.5 0.5 8.6Z" fill="#c4c4c4"/></svg>
<div class="t" style="left:47.0px;top:287.8px;height:16px;line-height:16px;font-size:12px;color:#d2d2d2;letter-spacing:0.25px;">JetBrains Rider Editor</div>
<svg style="left:18.5px;top:306.8px;" width="9" height="10" viewBox="0 0 9 10"><path d="M1.5 0.8 L8 5 L1.5 9.2Z" fill="#6e6e6e"/></svg>
<svg style="left:31px;top:306.3px;" width="13" height="11" viewBox="0 0 12 10"><path d="M0.5 1.6 Q0.5 0.6 1.5 0.6 H4.6 L5.8 2 H10.6 Q11.5 2 11.5 3 V8.6 Q11.5 9.5 10.6 9.5 H1.5 Q0.5 9.5 0.5 8.6Z" fill="#c4c4c4"/></svg>
<div class="t" style="left:47.0px;top:303.8px;height:16px;line-height:16px;font-size:12px;color:#d2d2d2;letter-spacing:0.25px;">Mathematics</div>
</div>
<div style="left:195.6px;top:1062.2px;width:12.4px;height:306.79999999999995px;background:#353535;"></div>
<div style="left:197.4px;top:1079px;width:8.4px;height:145px;background:#5e5e5e;border-radius:4.2px;"></div>
<svg style="left:197.2px;top:1066px;" width="9" height="7" viewBox="0 0 9 7"><path d="M0.6 6 H8.4 L4.5 1Z" fill="#c4c4c4"/></svg>
<svg style="left:197.2px;top:1357px;" width="9" height="7" viewBox="0 0 9 7"><path d="M0.6 1 H8.4 L4.5 6Z" fill="#c4c4c4"/></svg>
<div style="left:208px;top:1062.2px;width:1.4px;height:306.79999999999995px;background:#232323;"></div>
<div style="left:209.4px;top:1062.2px;width:1381.6px;height:21.2px;background:#3c3c3c;"></div>
<div class="t" style="left:213.4px;top:1064.2px;height:18px;line-height:18px;font-size:12px;color:#dcdcdc;font-weight:700;letter-spacing:0.3px;">Assets</div>
<div style="left:209.4px;top:1083.4px;width:1381.6px;height:263.5999999999999px;background:#333333;"></div>
<div style="left:209.4px;top:1347px;width:1381.6px;height:22px;background:#3c3c3c;"></div>
<div style="left:1520.5px;top:1359px;width:54.5px;height:1.4px;background:#5c5c5c;"></div>
<div style="left:1538.8px;top:1354.8px;width:9.6px;height:9.6px;background:#c0c0c0;border-radius:50%;"></div>
<div class="t" style="left:217.1px;top:1145.3px;width:64px;height:14px;line-height:14px;text-align:center;font-size:10px;color:#cfcfcf;letter-spacing:0.2px;">Resour...</div>
<svg style="left:229.9px;top:1102.4px;" width="38.4" height="32" viewBox="0 0 38.4 32"><path d="M1.5 3.6 Q1.5 1 4 1 H12.4 Q14 1 15 2.4 L17.4 6 H34 Q37 6 37 9 V28 Q37 31 34 31 H4.5 Q1.5 31 1.5 28Z" fill="#c2c2c2"/></svg>
<div class="t" style="left:279.1px;top:1145.3px;width:64px;height:14px;line-height:14px;text-align:center;font-size:10px;color:#cfcfcf;letter-spacing:0.2px;">Samples</div>
<svg style="left:291.90000000000003px;top:1102.4px;" width="38.4" height="32" viewBox="0 0 38.4 32"><path d="M1.5 3.6 Q1.5 1 4 1 H12.4 Q14 1 15 2.4 L17.4 6 H34 Q37 6 37 9 V28 Q37 31 34 31 H4.5 Q1.5 31 1.5 28Z" fill="#c2c2c2"/></svg>
<div class="t" style="left:341.1px;top:1145.3px;width:64px;height:14px;line-height:14px;text-align:center;font-size:10px;color:#cfcfcf;letter-spacing:0.2px;">Settings</div>
<svg style="left:353.90000000000003px;top:1102.4px;" width="38.4" height="32" viewBox="0 0 38.4 32"><path d="M1.5 3.6 Q1.5 1 4 1 H12.4 Q14 1 15 2.4 L17.4 6 H34 Q37 6 37 9 V28 Q37 31 34 31 H4.5 Q1.5 31 1.5 28Z" fill="#c2c2c2"/></svg>
<div class="t" style="left:403.1px;top:1145.3px;width:64px;height:14px;line-height:14px;text-align:center;font-size:10px;color:#cfcfcf;letter-spacing:0.2px;">TextMe...</div>
<svg style="left:415.90000000000003px;top:1102.4px;" width="38.4" height="32" viewBox="0 0 38.4 32"><path d="M1.5 3.6 Q1.5 1 4 1 H12.4 Q14 1 15 2.4 L17.4 6 H34 Q37 6 37 9 V28 Q37 31 34 31 H4.5 Q1.5 31 1.5 28Z" fill="#c2c2c2"/></svg>
<div class="t" style="left:465.1px;top:1145.3px;width:64px;height:14px;line-height:14px;text-align:center;font-size:10px;color:#cfcfcf;letter-spacing:0.2px;">XR</div>
<svg style="left:477.90000000000003px;top:1102.4px;" width="38.4" height="32" viewBox="0 0 38.4 32"><path d="M1.5 3.6 Q1.5 1 4 1 H12.4 Q14 1 15 2.4 L17.4 6 H34 Q37 6 37 9 V28 Q37 31 34 31 H4.5 Q1.5 31 1.5 28Z" fill="#c2c2c2"/></svg>
<div class="t" style="left:527.1px;top:1145.3px;width:64px;height:14px;line-height:14px;text-align:center;font-size:10px;color:#cfcfcf;letter-spacing:0.2px;">New Sc...</div>
<div class="t" style="left:589.1px;top:1145.3px;width:64px;height:14px;line-height:14px;text-align:center;font-size:10px;color:#cfcfcf;letter-spacing:0.2px;">UnityDe...</div>
<div class="t" style="left:651.1px;top:1145.3px;width:64px;height:14px;line-height:14px;text-align:center;font-size:10px;color:#cfcfcf;letter-spacing:0.2px;">Universa...</div>
<svg style="left:539.1px;top:1094px;" width="40" height="48" viewBox="0 0 40 48"><path d="M20 1 L38.5 11.5 V34.5 L20 45.5 L1.5 34.5 V11.5Z" fill="#f4f4f4"/><path d="M20 8 L29.5 13.6 L20 19.2 L10.5 13.6Z" fill="#333"/><path d="M8 18.5 L17.4 24 V35.4 L8 29.8Z" fill="#333"/><path d="M32 18.5 L22.6 24 V35.4 L32 29.8Z" fill="#333"/><path d="M20 1 V9 M1.5 34.5 L9 30 M38.5 34.5 L31 30" stroke="#333" stroke-width="3.4"/><path d="M1.5 34.5 L20 45.5 L38.5 34.5 L31 30 L20 37 L9 30Z" fill="#dcdcdc"/></svg>
<svg style="left:600.6px;top:1096px;" width="52" height="46" viewBox="0 0 52 46"><path d="M6 1 H27 L38.5 11.5 V41.5 Q38.5 45 35 45 H6 Q2.5 45 2.5 41.5 V4.5 Q2.5 1 6 1Z" fill="#ededed"/><path d="M27 1 L38.5 11.5 H29 Q27 11.5 27 9.5Z" fill="#cfcfcf"/><text x="6.5" y="33.5" font-family="Liberation Sans, sans-serif" font-size="26" font-weight="700" fill="#a81515" letter-spacing="3.5">{}</text><circle cx="43.6" cy="23.5" r="7.4" fill="#d6d6d6" stroke="#333" stroke-width="1.4"/><path d="M41 19.4 L48.2 23.5 L41 27.6Z" fill="#2c2c2c"/></svg>
<svg style="left:661.1px;top:1095px;" width="60" height="50" viewBox="0 0 60 50"><path d="M19.5 3 L36 12 V32 L19.5 41.5 L3 32 V12Z M3.4 12.2 L19.5 21.4 L35.6 12.2 M19.5 21.4 V41" fill="none" stroke="#5cc8f4" stroke-width="2.8" stroke-linejoin="round"/><path d="M19.5 5.8 L32 12.4 L19.5 19.4 L7 12.4Z M5.6 16 L17.6 22.8 V37.4 L5.6 30.6Z" fill="#3a3a3a" opacity="0.55"/><circle cx="36" cy="34" r="12.5" fill="#2b3138"/><text x="22.6" y="43" font-family="Liberation Sans, sans-serif" font-size="27" font-weight="700" fill="#f0703a" letter-spacing="2.5">{}</text></svg>
<div style="left:0px;top:1369px;width:2560px;height:24px;background:#191919;"></div>
<div style="left:0px;top:1390.2px;width:2560px;height:3px;background:#383133;"></div>
<svg style="left:2458.7px;top:1373.5px;" width="16" height="16" viewBox="0 0 16 16"><ellipse cx="8" cy="9" rx="3.6" ry="4.6" fill="#d0d0d0"/><circle cx="8" cy="4" r="2" fill="#d0d0d0"/><path d="M2 6 L5 8 M14 6 L11 8 M1.5 10 H4.5 M14.5 10 H11.5 M2.5 14 L5 12 M13.5 14 L11 12" stroke="#d0d0d0" stroke-width="1.2"/><path d="M2 2 L14 14.5" stroke="#191919" stroke-width="2.4"/><path d="M2.6 1.6 L14.6 14" stroke="#d0d0d0" stroke-width="1.1"/></svg>
<svg style="left:2485.3px;top:1373.5px;" width="16" height="16" viewBox="0 0 16 16"><ellipse cx="8" cy="4" rx="5.6" ry="2.4" fill="#d0d0d0"/><path d="M2.4 6 Q8 9.4 13.6 6 V8.6 Q8 12 2.4 8.6Z M2.4 10 Q8 13.4 13.6 10 V12.4 Q8 15.8 2.4 12.4Z" fill="#d0d0d0"/><path d="M2 2 L14 14.5" stroke="#191919" stroke-width="2.2"/><path d="M2.6 1.6 L14.6 14" stroke="#d0d0d0" stroke-width="1.1"/></svg>
<svg style="left:2511.7px;top:1373.5px;" width="16" height="16" viewBox="0 0 16 16"><circle cx="8" cy="8" r="5.6" fill="none" stroke="#d0d0d0" stroke-width="1.4"/><ellipse cx="8" cy="8" rx="2.4" ry="5.6" fill="none" stroke="#d0d0d0" stroke-width="1.1"/><path d="M2.6 8 H13.4" stroke="#d0d0d0" stroke-width="1.1"/><path d="M2 2 L14 14.5" stroke="#191919" stroke-width="2.2"/><path d="M2.6 1.6 L14.6 14" stroke="#d0d0d0" stroke-width="1.1"/></svg>
<svg style="left:2537.6px;top:1373.5px;" width="16" height="16" viewBox="0 0 16 16"><circle cx="8" cy="8" r="6" fill="none" stroke="#d0d0d0" stroke-width="1.4"/><path d="M5 8 L7.3 10.4 L11.4 5.8" fill="none" stroke="#d0d0d0" stroke-width="1.6"/></svg>
</div></body></html>
